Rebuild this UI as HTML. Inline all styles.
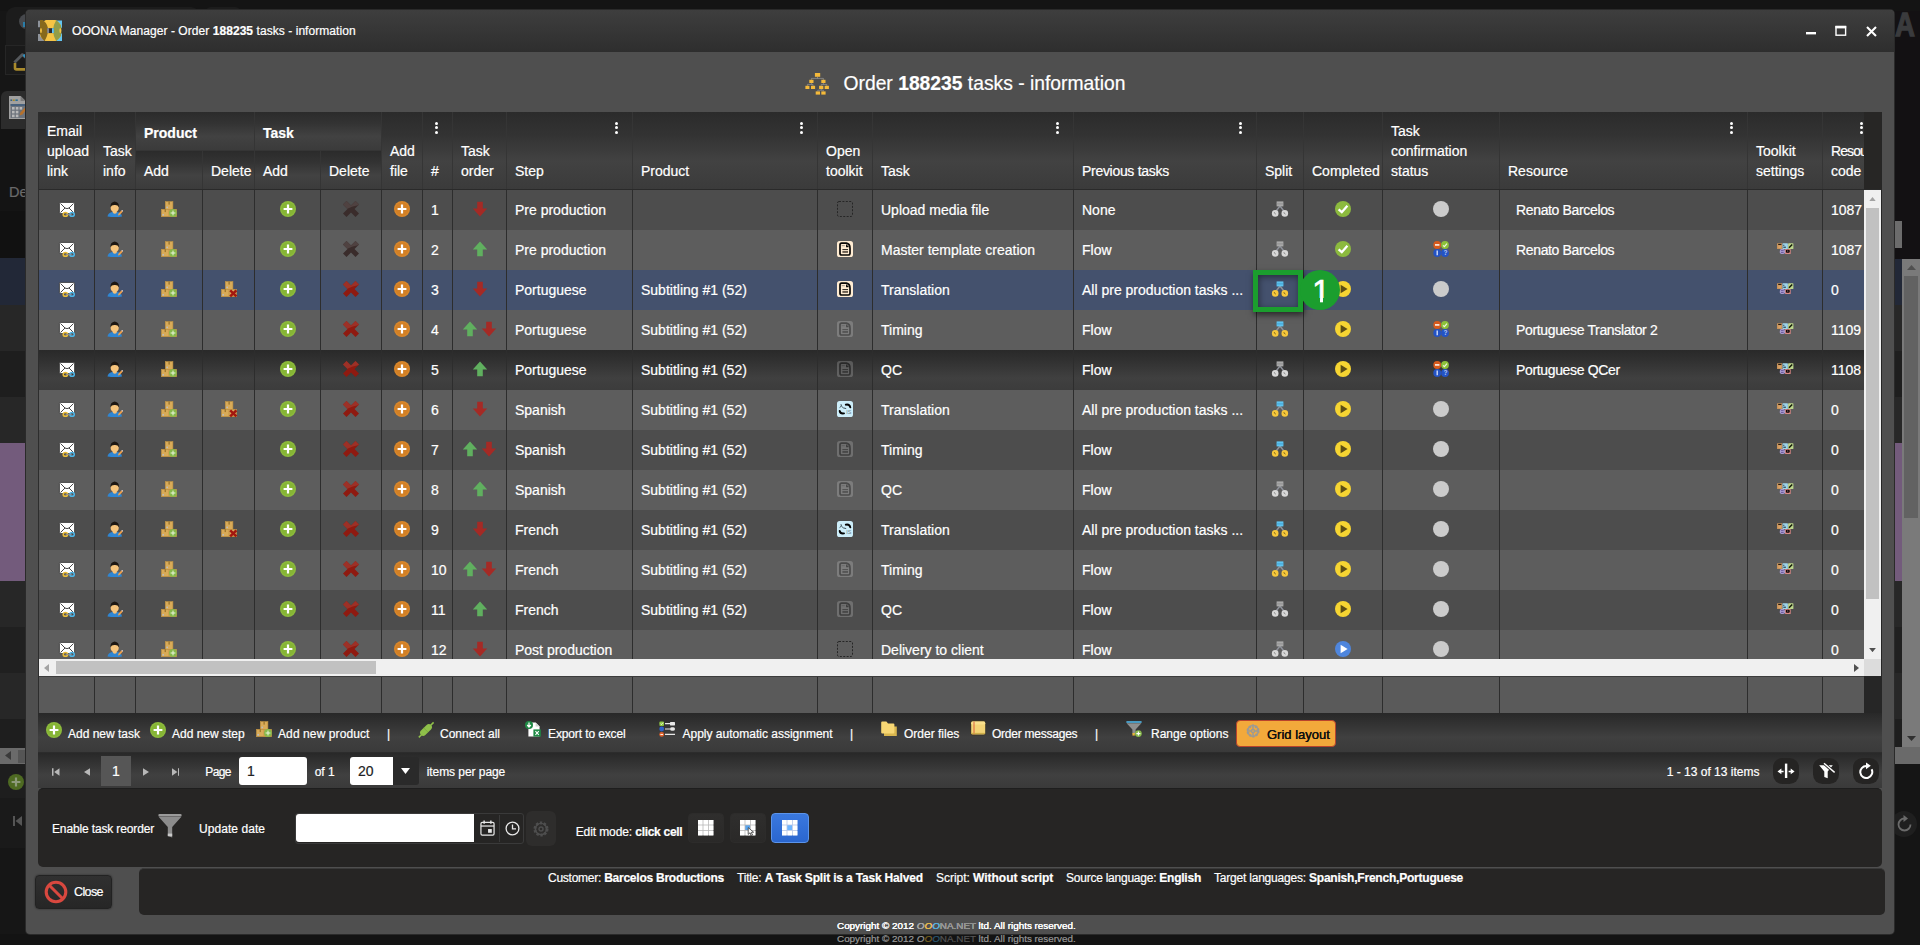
<!DOCTYPE html>
<html lang="en"><head><meta charset="utf-8"><title>OOONA Manager - Order 188235 tasks - information</title>
<style>
*{box-sizing:border-box;margin:0;padding:0}
html,body{width:1920px;height:945px;overflow:hidden;background:#161616}
body{position:relative;font-family:"Liberation Sans",sans-serif;color:#fff;font-size:14px;-webkit-text-stroke:0.2px currentColor}
.abs{position:absolute}
svg.ic{display:inline-block;vertical-align:top;overflow:visible}
#win{position:absolute;left:0;top:0;width:1920px;height:945px}
#winbg{position:absolute;left:26px;top:10px;width:1868px;height:924px;background:#4f4f4f;border-radius:4px;box-shadow:0 0 0 1px #2a2a2a}
#tbar{position:absolute;left:26px;top:10px;width:1868px;height:42px;border-radius:4px 4px 0 0;background:linear-gradient(#3e3e3e,#2e2e2e)}
#tbar .tt{position:absolute;left:46px;top:1px;line-height:40px;font-size:12px;color:#fff;white-space:nowrap}
#title{position:absolute;left:843.5px;top:65px;height:38px;line-height:38px;font-size:19.3px;white-space:nowrap}
#grid{position:absolute;left:38px;top:112px;width:1844px;height:601px;overflow:hidden;background:#262626}
#gleft{position:absolute;left:0;top:0;width:1px;height:601px;background:#2d2d2d}
#gright{position:absolute;left:1843px;top:0;width:1px;height:601px;background:#262626}
#hdr{position:absolute;left:0;top:0;width:1843px;height:78px;background:linear-gradient(#2b2b2b 0%,#333 30%,#424242 64%,#3b3b3b 100%);border-bottom:1px solid #2a2a2a;overflow:hidden}
#hdrin{position:absolute;left:0;top:0;width:1826px;height:78px;overflow:hidden}
.h{position:absolute;top:0;height:77px;border-left:1px solid #353535;font-size:14px;line-height:20px;padding:0 0 8px 8px;display:flex;align-items:flex-end;white-space:nowrap;overflow:hidden;background:linear-gradient(#2b2b2b 0%,#333 30%,#424242 64%,#3b3b3b 100%)}
.h.first{border-left:0;padding-left:9px}
.h.g{height:39px;font-weight:bold;padding-bottom:7px;border-bottom:1px solid #353535}
.h.s{top:39px;height:38px}
.dots{position:absolute;top:9.5px;width:3px;height:12px}
.dots i{display:block;width:3px;height:3px;border-radius:50%;background:#fff;margin-bottom:1.5px}
#rows{position:absolute;left:0;top:78px;width:1826px;height:469px;overflow:hidden;background:#4d4d4d}
.row{position:absolute;left:0;width:1860px;height:40px;background:#4d4d4d}
.row.alt{background:#5d5d5d}
.row.sel{background:#44516d}
.row.hov{background:linear-gradient(#292929 0%,#323232 30%,#404040 70%,#3c3c3c 100%)}
.c{position:absolute;top:0;height:40px;border-left:1px solid #2d2d2d;white-space:nowrap;overflow:hidden}
.c.first{border-left:0;padding-left:1px}
.c.t{line-height:40px;padding-left:8px;font-size:14px}
.c.res{padding-left:16px;letter-spacing:-0.35px}
.c.i{text-align:center;padding-top:11px;font-size:0}
.c.tk{padding-top:13px}
.gap{display:inline-block;width:3px}
#hsb{position:absolute;left:0;top:547px;width:1843px;height:17px;background:#f0f0f0}
#vsb{position:absolute;left:1826px;top:78px;width:17px;height:469px;background:#f0f0f0}
#gfoot{position:absolute;left:0;top:564px;width:1826px;height:37px;background:#5a5a5a;overflow:hidden;border-top:1px solid #3c3c3c}
#gfoot div{position:absolute;top:0;height:37px;border-left:1px solid #2d2d2d}
#tool{position:absolute;left:38px;top:713px;width:1844px;height:39px;background:linear-gradient(#282828 0%,#393939 45%,#404040 62%,#3a3a3a 100%);font-size:12px}
#tool span{position:absolute;top:12px;line-height:18px;white-space:nowrap}
#tool svg{position:absolute}
#pager{position:absolute;left:38px;top:752px;width:1844px;height:36px;background:linear-gradient(#282828 0%,#393939 45%,#404040 62%,#3a3a3a 100%);border-top:1px solid #2c2c2c;font-size:12px}
#pager span{position:absolute;top:10px;line-height:18px;white-space:nowrap}
#panel{position:absolute;left:38px;top:788px;width:1844px;height:79px;background:#262524;border-radius:5px;font-size:12px;border-top:1px solid #1e1e1e}
#panel span{position:absolute;line-height:18px;white-space:nowrap}
#info{position:absolute;left:139px;top:868px;width:1746px;height:47px;background:#262524;border-radius:5px;font-size:12px;border-top:1px solid #3a3a3a}
#info span{position:absolute;top:1px;line-height:16px;white-space:nowrap}
#closeb{position:absolute;left:35px;top:875px;width:77px;height:34px;background:linear-gradient(#303030,#262626);border:1px solid #222;border-radius:4px;font-size:12px;box-shadow:0 0 2px rgba(0,0,0,.5)}
.copy{position:absolute;left:837px;font-size:9.9px;line-height:12px;white-space:nowrap}
b{font-weight:bold}

#hdrcap{position:absolute;left:1826px;top:0;width:18px;height:77px;background:#272625}

</style></head>
<body>
<div id="bg">
<div class="abs" style="left:0;top:0;width:1920px;height:11px;background:#141414"></div>
<div class="abs" style="left:6px;top:6.5px;width:194px;height:40px;background:#1c1c1c;border-radius:9px 9px 0 0"></div>
<div class="abs" style="left:19px;top:13.5px;width:15px;height:15px;border-radius:8px;background:#46484c"></div><div class="abs" style="left:23px;top:22px;width:4px;height:5px;background:#2a7da8"></div>
<div class="abs" style="left:205px;top:7px;width:36px;height:10px;background:#1c1c1c;border-radius:6px 6px 0 0"></div>
<div class="abs" style="left:5px;top:45px;width:30px;height:30px;background:#1a1a1a;border:1px solid #262626"></div>
<svg class="abs" style="left:13px;top:52px" width="14" height="20" viewBox="0 0 14 20"><path d="M1.4 10.6 L9.4 2.6 L14 6.4" fill="none" stroke="#55585c" stroke-width="2.8" stroke-linejoin="round"/><path d="M14 8 L9.6 3.6 L11 2.2 H14Z" fill="#2a8fc0"/><path d="M2 11 V16 Q2 17.4 3.4 17.4 H14" fill="none" stroke="#a98a2c" stroke-width="2.6"/></svg>
<div class="abs" style="left:1px;top:91px;width:60px;height:38px;background:#2c2c2c;border-radius:6px 6px 0 0"></div>
<svg class="abs" style="left:9.4px;top:95.8px;opacity:.8" width="16.6" height="23" viewBox="0 0 16.6 23"><path d="M0 0 H11.6 L16.6 5 V23 H0Z" fill="#bdbdbd"/><path d="M11.6 0 V5 H16.6Z" fill="#8e8e8e"/><rect x="1.4" y="3.4" width="1.8" height="1.6" fill="#3c6e96"/><rect x="3.8" y="3.4" width="2" height="1.6" fill="#c9a227"/><rect x="6.4" y="3.4" width="2.4" height="1.6" fill="#2d7fae"/><rect x="1.6" y="8" width="15" height="14" fill="#7c848f"/><rect x="1.6" y="8" width="15" height="2" fill="#4f6f91"/><g fill="#dcdcdc"><rect x="3" y="11" width="2.6" height="2.6"/><rect x="6.8" y="11" width="2.6" height="2.6"/><rect x="10.6" y="11" width="2.6" height="2.6"/><rect x="3" y="14.8" width="2.6" height="2.6"/><rect x="6.8" y="14.8" width="2.6" height="2.6"/><rect x="3" y="18.6" width="2.6" height="2.6"/><rect x="6.8" y="18.6" width="2.6" height="2.6"/></g><path d="M10.6 19.6 L11.4 16.4 L16 11.6 L17.6 13.2 L13.4 18.4Z" fill="#d9832c"/></svg>
<div class="abs" style="left:0;top:129px;width:30px;height:82px;background:#141414"></div>
<div class="abs" style="left:9px;top:183px;font-size:14.5px;color:#6a6a6a;line-height:18px">De</div>
<div class="abs" style="left:0;top:211px;width:30px;height:47px;background:#111"></div>
<div class="abs" style="left:0;top:258px;width:30px;height:47px;background:#222837"></div>
<div class="abs" style="left:0;top:305px;width:30px;height:46px;background:#272727"></div>
<div class="abs" style="left:0;top:351px;width:30px;height:46px;background:#1e1e1e"></div>
<div class="abs" style="left:0;top:397px;width:30px;height:46px;background:#272727"></div>
<div class="abs" style="left:0;top:443px;width:30px;height:138px;background:#735b7c"></div>
<div class="abs" style="left:0;top:581px;width:30px;height:46px;background:#272727"></div>
<div class="abs" style="left:0;top:627px;width:30px;height:46px;background:#202020"></div>
<div class="abs" style="left:0;top:673px;width:30px;height:46px;background:#272727"></div>
<div class="abs" style="left:0;top:719px;width:30px;height:29px;background:#1e1e1e"></div>
<div class="abs" style="left:0;top:748px;width:30px;height:17px;background:#6a6a6a"></div><div class="abs" style="left:18px;top:750px;width:12px;height:13px;background:#555"></div>
<svg class="abs" style="left:5px;top:751px" width="6" height="9" viewBox="0 0 6 9"><path d="M6 0V9L0 4.5Z" fill="#3a3a3a"/></svg>
<div class="abs" style="left:0;top:764px;width:30px;height:34px;background:#1e1e1e"></div>
<svg class="abs" style="left:8px;top:774px" width="16" height="16" viewBox="0 0 16 16"><circle cx="8" cy="8" r="8" fill="#4e6a22"/><path d="M8 3.6V12.4M3.6 8H12.4" stroke="#8d9a7a" stroke-width="2.2"/></svg>
<div class="abs" style="left:0;top:798px;width:30px;height:50px;background:#1a1a1a"></div>
<svg class="abs" style="left:13px;top:816px" width="9" height="10" viewBox="0 0 9 10"><path d="M1 0V10" stroke="#555" stroke-width="2"/><path d="M9 0V10L2.5 5Z" fill="#555"/></svg>
<div class="abs" style="left:0;top:848px;width:30px;height:97px;background:#161616"></div>
<div class="abs" style="left:0;top:934px;width:1920px;height:11px;background:#131313"></div>
<!-- right strip -->
<div class="abs" style="left:1890px;top:11px;width:30px;height:60px;background:#131113"></div>
<div class="abs" style="left:1895px;top:7px;width:25px;font-size:32.5px;font-weight:bold;line-height:36px;color:#3a3b3d;height:36px;-webkit-text-stroke:1.3px #3a3b3d"><span style="display:inline-block;transform:scaleX(.85);transform-origin:0 0">A</span></div>
<div class="abs" style="left:1890px;top:71px;width:30px;height:60px;background:#131113"></div>
<div class="abs" style="left:1890px;top:131px;width:30px;height:128px;background:#131113"></div>


<div class="abs" style="left:1894px;top:221px;width:8px;height:27px;background:#6c6c6c"></div>
<div class="abs" style="left:1890px;top:259px;width:12px;height:46px;background:#222837"></div>
<div class="abs" style="left:1890px;top:305px;width:13px;height:46px;background:#272727"></div>
<div class="abs" style="left:1890px;top:351px;width:13px;height:46px;background:#1e1e1e"></div>
<div class="abs" style="left:1890px;top:397px;width:13px;height:46px;background:#272727"></div>
<div class="abs" style="left:1890px;top:443px;width:13px;height:138px;background:#735b7c"></div>
<div class="abs" style="left:1890px;top:581px;width:13px;height:46px;background:#272727"></div>
<div class="abs" style="left:1890px;top:627px;width:13px;height:46px;background:#202020"></div>
<div class="abs" style="left:1890px;top:673px;width:13px;height:46px;background:#272727"></div>
<div class="abs" style="left:1890px;top:719px;width:13px;height:28px;background:#1e1e1e"></div>
<div class="abs" style="left:1890px;top:747px;width:30px;height:17px;background:#6a6a6a"></div>
<div class="abs" style="left:1902px;top:259px;width:18px;height:488px;background:#7a7a7a"></div>
<div class="abs" style="left:1904px;top:276px;width:14px;height:242px;background:#626262"></div>
<svg class="abs" style="left:1907px;top:265px" width="9" height="5" viewBox="0 0 9 5"><path d="M0 5H9L4.5 0Z" fill="#505050"/></svg>
<svg class="abs" style="left:1907px;top:736px" width="9" height="5" viewBox="0 0 9 5"><path d="M0 0H9L4.5 5Z" fill="#303030"/></svg>
<div class="abs" style="left:1890px;top:764px;width:30px;height:181px;background:#151515"></div>
<div class="abs" style="left:1891px;top:811px;width:26px;height:26px;border-radius:13px;background:#1f1f1f"></div>
<svg class="abs" style="left:1896px;top:815px" width="17" height="18" viewBox="0 0 17 18"><path d="M8.5 3.5 A6 6 0 1 0 14.5 9.5" fill="none" stroke="#6a6a6a" stroke-width="1.8"/><path d="M7.5 0V7L12 3.5Z" fill="#6a6a6a"/></svg>
</div>
<div id="win">
<div id="winbg"></div>
<div id="tbar">
<svg class="abs" style="left:11.8px;top:10px" width="24.4" height="21.4" viewBox="0 0 24.4 21.4"><clipPath id="lgb"><rect x="0" y="0" width="24.4" height="21.4"/></clipPath><clipPath id="lgy"><rect x="2" y="0" width="21.2" height="21.4"/></clipPath><clipPath id="lgd"><circle cx="12.6" cy="10.6" r="11.6"/></clipPath><g clip-path="url(#lgb)"><path d="M0 0.8 H2.4 V7.2 H0Z M0 14 H2.2 L6.4 21 H0Z" fill="#8e939b"/><path d="M24.4 0.4 V7.8 H22 L18 0.4Z M24.4 21.2 V13.6 H22 L18 21.2Z" fill="#63c4f0"/><g clip-path="url(#lgy)"><circle cx="12.6" cy="10.6" r="11.6" fill="#f5c445"/><path d="M2 0 H5 Q10.6 5 10 10.6 Q9.8 16.4 6.4 21 Q3.2 18.6 2 14Z" fill="#86691c"/><g clip-path="url(#lgd)"><path d="M18.4 0 H26 V21.4 H18.4 Q14.8 15.6 15.2 10.6 Q14.8 5.6 18.4 0Z" fill="#929d48"/></g></g><ellipse cx="3" cy="10.6" rx="0.9" ry="2.5" fill="#f5c445"/><ellipse cx="22.3" cy="10.6" rx="0.9" ry="2.6" fill="#f5c445"/><rect x="9.4" y="8.2" width="6.4" height="4.9" fill="#2a2a33"/><rect x="9.2" y="8.2" width="1.7" height="4.9" fill="#8e939b"/><rect x="14" y="8.2" width="1.9" height="4.9" fill="#63c4f0"/></g></svg>
<div class="tt" style="letter-spacing:0.06px">OOONA Manager - Order <b>188235</b> tasks - information</div>
<svg class="abs" style="left:1779px;top:22px" width="12" height="3" viewBox="0 0 12 3"><rect x="1" y="0" width="10" height="2.4" fill="#fff"/></svg>
<svg class="abs" style="left:1809px;top:15px" width="12" height="12" viewBox="0 0 12 12"><rect x="1" y="1.6" width="9.6" height="8.6" fill="none" stroke="#fff" stroke-width="1.4"/><rect x="0.4" y="0.8" width="10.8" height="2.6" fill="#fff"/></svg>
<svg class="abs" style="left:1839.5px;top:15.5px" width="11" height="11" viewBox="0 0 11 11"><path d="M1 1 L10 10 M10 1 L1 10" stroke="#fff" stroke-width="2.1"/></svg>
</div>
<svg class="abs" style="left:805px;top:73px" width="24" height="22" viewBox="0 0 24 22"><path d="M12.5 3.8V5.4M6.4 6.8V5.4H18.4V6.8M6.4 10V11.4M2.4 12.8V11.4H8V12.8M18.4 10V11.4M16.2 12.8V11.4H21.8V12.8M16.2 16V17.2M12.8 18.4V17.2H18.4V18.4" fill="none" stroke="#9a9a9a" stroke-width="0.7"/><g fill="#f4b93a"><rect x="9.9" y="0" width="5.3" height="3.8"/><rect x="4.3" y="6.8" width="4.2" height="3.2"/><rect x="16.3" y="6.8" width="4.2" height="3.2"/><rect x="0.4" y="12.8" width="4" height="3.2"/><rect x="6" y="12.8" width="4.1" height="3.2"/><rect x="14.1" y="12.8" width="4.2" height="3.2"/><rect x="19.7" y="12.8" width="4.2" height="3.2"/><rect x="10.7" y="18.4" width="4.3" height="3.2"/><rect x="16.3" y="18.4" width="4.3" height="3.2"/></g></svg>
<div id="title">Order <b>188235</b> tasks - information</div>
<div id="grid">
<div id="hdr"><div id="hdrin">
<div class="h first" style="left:0px;width:56px"><div>Email<br>upload<br>link</div><div id="hdrcap"></div></div>
<div class="h " style="left:56px;width:41px"><div>Task<br>info</div><div id="hdrcap"></div></div>
<div class="h g" style="left:97px;width:119px"><div>Product</div><div id="hdrcap"></div></div>
<div class="h s" style="left:97px;width:67px"><div>Add</div><div id="hdrcap"></div></div>
<div class="h s" style="left:164px;width:52px"><div>Delete</div><div id="hdrcap"></div></div>
<div class="h g" style="left:216px;width:127px"><div>Task</div><div id="hdrcap"></div></div>
<div class="h s" style="left:216px;width:66px"><div>Add</div><div id="hdrcap"></div></div>
<div class="h s" style="left:282px;width:61px"><div>Delete</div><div id="hdrcap"></div></div>
<div class="h " style="left:343px;width:41px"><div>Add<br>file</div><div id="hdrcap"></div></div>
<div class="h " style="left:384px;width:30px"><div>#</div><div id="hdrcap"></div></div>
<div class="dots" style="left:397px"><i></i><i></i><i></i></div>
<div class="h " style="left:414px;width:54px"><div>Task<br>order</div><div id="hdrcap"></div></div>
<div class="h " style="left:468px;width:126px"><div>Step</div><div id="hdrcap"></div></div>
<div class="dots" style="left:577px"><i></i><i></i><i></i></div>
<div class="h " style="left:594px;width:185px"><div>Product</div><div id="hdrcap"></div></div>
<div class="dots" style="left:762px"><i></i><i></i><i></i></div>
<div class="h " style="left:779px;width:55px"><div>Open<br>toolkit</div><div id="hdrcap"></div></div>
<div class="h " style="left:834px;width:201px"><div>Task</div><div id="hdrcap"></div></div>
<div class="dots" style="left:1018px"><i></i><i></i><i></i></div>
<div class="h " style="left:1035px;width:183px"><div style="letter-spacing:-0.3px">Previous tasks</div><div id="hdrcap"></div></div>
<div class="dots" style="left:1201px"><i></i><i></i><i></i></div>
<div class="h " style="left:1218px;width:47px"><div>Split</div><div id="hdrcap"></div></div>
<div class="h " style="left:1265px;width:79px"><div>Completed</div><div id="hdrcap"></div></div>
<div class="h " style="left:1344px;width:117px"><div>Task<br>confirmation<br>status</div><div id="hdrcap"></div></div>
<div class="h " style="left:1461px;width:248px"><div>Resource</div><div id="hdrcap"></div></div>
<div class="dots" style="left:1692px"><i></i><i></i><i></i></div>
<div class="h " style="left:1709px;width:75px"><div>Toolkit<br>settings</div><div id="hdrcap"></div></div>
<div class="h " style="left:1784px;width:75px"><div><span style="letter-spacing:-0.9px">Resource</span><br>code</div><div id="hdrcap"></div></div>
<div class="dots" style="left:1822px"><i></i><i></i><i></i></div>
</div><div id="hdrcap"></div></div>
<div id="rows">
<div class="row " style="top:0px">
<div class="c i first" style="left:0px;width:56px"><svg class="ic" width="16" height="16" viewBox="0 0 16 16" ><rect x="0.4" y="1.4" width="15.2" height="11.2" rx="1" fill="#fff" stroke="#2e2e2e" stroke-width="0.8"/>
<path d="M1.5 2.5 L6 7 Q8 8.2 10 7 L14.5 2.5 M1.5 11.5 L6 7 M14.5 11.5 L10 7" fill="none" stroke="#333" stroke-width="0.9"/>
<ellipse cx="6.4" cy="13.4" rx="2.2" ry="1.85" fill="none" stroke="#e9bd3a" stroke-width="1.5"/>
<ellipse cx="13.1" cy="13.4" rx="2.2" ry="1.85" fill="none" stroke="#4db4e6" stroke-width="1.5"/>
<path d="M6.6 13.4 H12.8" stroke="#8a8f96" stroke-width="1"/></svg></div><div class="c i" style="left:56px;width:41px"><svg class="ic" width="16" height="16" viewBox="0 0 16 16" ><path d="M0.5 15.6 Q1 11.6 5.5 11 L10 11 Q14.5 11.6 15 15.6 Q8 16.6 0.5 15.6Z" fill="#2f86d3"/>
<path d="M5.6 10.2 L6 12 Q7.7 13.6 9.6 12 L9.9 10.2Z" fill="#f4bf78"/>
<ellipse cx="7.7" cy="6.8" rx="4.1" ry="4.5" fill="#f6c47c"/>
<path d="M3.5 6.4 Q3 1.4 7.7 0.6 Q12.4 1.4 11.9 6.4 Q11 3.8 7.7 4 Q4.4 3.8 3.5 6.4Z" fill="#1d1712"/>
<path d="M11 14.6 L11.4 12.8 L14.4 9.6 L15.6 10.8 L12.7 14Z" fill="#f0a04b"/>
<path d="M14.4 9.6 L15 9 Q15.8 9 16 10.2 L15.6 10.8Z" fill="#f3e6e0"/></svg></div><div class="c i" style="left:97px;width:67px"><svg class="ic" width="16" height="16" viewBox="0 0 16 16" ><rect x="4.3" y="0.6" width="7.6" height="7.8" fill="#d9ab58" stroke="#c09240" stroke-width="0.6"/>
<rect x="0.4" y="8.3" width="7.7" height="7.4" fill="#d9ab58" stroke="#c09240" stroke-width="0.6"/>
<rect x="8.1" y="8.3" width="7.5" height="7.4" fill="#d9ab58" stroke="#c09240" stroke-width="0.6"/>
<rect x="7.6" y="0.6" width="1" height="3" fill="#8a6520"/>
<rect x="3.7" y="8.3" width="1" height="2.8" fill="#8a6520"/>
<rect x="5.4" y="5.6" width="1.6" height="1.6" fill="#b9bcc0"/><rect x="1.4" y="13" width="1.6" height="1.6" fill="#b9bcc0"/><circle cx="12" cy="12" r="3.9" fill="#86b84a"/><path d="M12 9.6V14.4M9.6 12H14.4" stroke="#e9f4dc" stroke-width="1"/></svg></div><div class="c i" style="left:164px;width:52px"></div><div class="c i" style="left:216px;width:66px"><svg class="ic" width="16" height="16" viewBox="0 0 16 16" ><circle cx="8" cy="8" r="8" fill="#8dbb3c"/><circle cx="8" cy="8" r="6.6" fill="#86b535"/><path d="M8 3.6V12.4M3.6 8H12.4" stroke="#fff" stroke-width="2.2"/></svg></div><div class="c i" style="left:282px;width:61px"><svg class="ic" width="16" height="16" viewBox="0 0 16 16" ><path d="M3.5 0 L8 4.5 L12.5 0 L16 3.5 L11.5 8 L16 12.5 L12.5 16 L8 11.5 L3.5 16 L0 12.5 L4.5 8 L0 3.5Z" fill="#3a2c2b"/><path d="M3.5 0 L8 4.5 L12.5 0 L16 3.5 L15.2 4.3 Q9.5 5 4.9 7.6 L4.5 8 L0 3.5Z" fill="#4f4241"/></svg></div><div class="c i" style="left:343px;width:41px"><svg class="ic" width="16" height="16" viewBox="0 0 16 16" ><circle cx="8" cy="8" r="8" fill="#d9872b"/><circle cx="8" cy="8" r="6.6" fill="#d28026"/><path d="M8 3.6V12.4M3.6 8H12.4" stroke="#fff" stroke-width="2.2"/></svg></div><div class="c t" style="left:384px;width:30px">1</div><div class="c i" style="left:414px;width:54px"><svg class="ic" width="16" height="16" viewBox="0 0 16 16" ><path d="M5.2 0.8 H10.8 V7.6 H15.2 L8 15.4 L0.8 7.6 H5.2Z" fill="#a52a25"/></svg></div><div class="c t" style="left:468px;width:126px">Pre production</div><div class="c t" style="left:594px;width:185px"></div><div class="c i" style="left:779px;width:55px"><svg class="ic" width="16" height="16" viewBox="0 0 16 16" ><rect x="0.5" y="0.5" width="15" height="15" rx="1.5" fill="none" stroke="#262626" stroke-width="1" stroke-dasharray="2 1.4"/></svg></div><div class="c t" style="left:834px;width:201px">Upload media file</div><div class="c t" style="left:1035px;width:183px">None</div><div class="c i" style="left:1218px;width:47px"><svg class="ic" width="16" height="16" viewBox="0 0 16 16" ><path d="M8 5 L3.4 11 M8 5 L12.6 11" stroke="#8d9099" stroke-width="1.5" fill="none"/><rect x="4.6" y="0.4" width="6.8" height="5" fill="#a9a9a9"/><path d="M4.6 2.9H11.4" stroke="#8a8a8a" stroke-width="0.8"/><circle cx="3.2" cy="12.4" r="3.3" fill="#d8d8d8"/><circle cx="12.8" cy="12.4" r="3.3" fill="#d8d8d8"/><path d="M2.4 11 V12.2 L4 13.2 M12 11 V12.2 L13.6 13.2" stroke="#8a8a8a" stroke-width="0.8" fill="none"/></svg></div><div class="c i" style="left:1265px;width:79px"><svg class="ic" width="16" height="16" viewBox="0 0 16 16" ><circle cx="8" cy="8" r="8" fill="#8cba3e"/><path d="M3.6 8.4 L6.8 11.2 L12.4 4.8" fill="none" stroke="#fff" stroke-width="2.3"/></svg></div><div class="c i" style="left:1344px;width:117px"><svg class="ic" width="16" height="16" viewBox="0 0 16 16" ><circle cx="8" cy="8" r="8" fill="#cbcbcb"/></svg></div><div class="c t res" style="left:1461px;width:248px">Renato Barcelos</div><div class="c i tk" style="left:1709px;width:75px"></div><div class="c t" style="left:1784px;width:75px">1087</div>
</div>
<div class="row alt" style="top:40px">
<div class="c i first" style="left:0px;width:56px"><svg class="ic" width="16" height="16" viewBox="0 0 16 16" ><rect x="0.4" y="1.4" width="15.2" height="11.2" rx="1" fill="#fff" stroke="#2e2e2e" stroke-width="0.8"/>
<path d="M1.5 2.5 L6 7 Q8 8.2 10 7 L14.5 2.5 M1.5 11.5 L6 7 M14.5 11.5 L10 7" fill="none" stroke="#333" stroke-width="0.9"/>
<ellipse cx="6.4" cy="13.4" rx="2.2" ry="1.85" fill="none" stroke="#e9bd3a" stroke-width="1.5"/>
<ellipse cx="13.1" cy="13.4" rx="2.2" ry="1.85" fill="none" stroke="#4db4e6" stroke-width="1.5"/>
<path d="M6.6 13.4 H12.8" stroke="#8a8f96" stroke-width="1"/></svg></div><div class="c i" style="left:56px;width:41px"><svg class="ic" width="16" height="16" viewBox="0 0 16 16" ><path d="M0.5 15.6 Q1 11.6 5.5 11 L10 11 Q14.5 11.6 15 15.6 Q8 16.6 0.5 15.6Z" fill="#2f86d3"/>
<path d="M5.6 10.2 L6 12 Q7.7 13.6 9.6 12 L9.9 10.2Z" fill="#f4bf78"/>
<ellipse cx="7.7" cy="6.8" rx="4.1" ry="4.5" fill="#f6c47c"/>
<path d="M3.5 6.4 Q3 1.4 7.7 0.6 Q12.4 1.4 11.9 6.4 Q11 3.8 7.7 4 Q4.4 3.8 3.5 6.4Z" fill="#1d1712"/>
<path d="M11 14.6 L11.4 12.8 L14.4 9.6 L15.6 10.8 L12.7 14Z" fill="#f0a04b"/>
<path d="M14.4 9.6 L15 9 Q15.8 9 16 10.2 L15.6 10.8Z" fill="#f3e6e0"/></svg></div><div class="c i" style="left:97px;width:67px"><svg class="ic" width="16" height="16" viewBox="0 0 16 16" ><rect x="4.3" y="0.6" width="7.6" height="7.8" fill="#d9ab58" stroke="#c09240" stroke-width="0.6"/>
<rect x="0.4" y="8.3" width="7.7" height="7.4" fill="#d9ab58" stroke="#c09240" stroke-width="0.6"/>
<rect x="8.1" y="8.3" width="7.5" height="7.4" fill="#d9ab58" stroke="#c09240" stroke-width="0.6"/>
<rect x="7.6" y="0.6" width="1" height="3" fill="#8a6520"/>
<rect x="3.7" y="8.3" width="1" height="2.8" fill="#8a6520"/>
<rect x="5.4" y="5.6" width="1.6" height="1.6" fill="#b9bcc0"/><rect x="1.4" y="13" width="1.6" height="1.6" fill="#b9bcc0"/><circle cx="12" cy="12" r="3.9" fill="#86b84a"/><path d="M12 9.6V14.4M9.6 12H14.4" stroke="#e9f4dc" stroke-width="1"/></svg></div><div class="c i" style="left:164px;width:52px"></div><div class="c i" style="left:216px;width:66px"><svg class="ic" width="16" height="16" viewBox="0 0 16 16" ><circle cx="8" cy="8" r="8" fill="#8dbb3c"/><circle cx="8" cy="8" r="6.6" fill="#86b535"/><path d="M8 3.6V12.4M3.6 8H12.4" stroke="#fff" stroke-width="2.2"/></svg></div><div class="c i" style="left:282px;width:61px"><svg class="ic" width="16" height="16" viewBox="0 0 16 16" ><path d="M3.5 0 L8 4.5 L12.5 0 L16 3.5 L11.5 8 L16 12.5 L12.5 16 L8 11.5 L3.5 16 L0 12.5 L4.5 8 L0 3.5Z" fill="#3a2c2b"/><path d="M3.5 0 L8 4.5 L12.5 0 L16 3.5 L15.2 4.3 Q9.5 5 4.9 7.6 L4.5 8 L0 3.5Z" fill="#4f4241"/></svg></div><div class="c i" style="left:343px;width:41px"><svg class="ic" width="16" height="16" viewBox="0 0 16 16" ><circle cx="8" cy="8" r="8" fill="#d9872b"/><circle cx="8" cy="8" r="6.6" fill="#d28026"/><path d="M8 3.6V12.4M3.6 8H12.4" stroke="#fff" stroke-width="2.2"/></svg></div><div class="c t" style="left:384px;width:30px">2</div><div class="c i" style="left:414px;width:54px"><svg class="ic" width="16" height="16" viewBox="0 0 16 16" ><path d="M5.2 15.2 H10.8 V8.4 H15.2 L8 0.6 L0.8 8.4 H5.2Z" fill="#60b05f"/></svg></div><div class="c t" style="left:468px;width:126px">Pre production</div><div class="c t" style="left:594px;width:185px"></div><div class="c i" style="left:779px;width:55px"><svg class="ic" width="16" height="16" viewBox="0 0 16 16" ><g opacity="1"><rect x="0" y="0" width="16" height="16" rx="2.6" fill="#ffecd2"/><path d="M4.6 2.2 H9.4 Q13 2.8 13 7.2 V12.4 Q13 14 11.4 14 H4.6 Q3 14 3 12.4 V3.8 Q3 2.2 4.6 2.2Z" fill="none" stroke="#0a0806" stroke-width="1.7"/><path d="M9.7 3.4 V5.5 H11.6" fill="none" stroke="#0a0806" stroke-width="1.3"/><path d="M5.4 8.6 H11" stroke="#0a0806" stroke-width="0.9"/><rect x="5.4" y="10.1" width="5.6" height="1.7" fill="#5a4e42"/><path d="M4.6 4.7 H7.8" stroke="#0a0806" stroke-width="0.7" stroke-opacity="0.55"/></g></svg></div><div class="c t" style="left:834px;width:201px">Master template creation</div><div class="c t" style="left:1035px;width:183px">Flow</div><div class="c i" style="left:1218px;width:47px"><svg class="ic" width="16" height="16" viewBox="0 0 16 16" ><path d="M8 5 L3.4 11 M8 5 L12.6 11" stroke="#8d9099" stroke-width="1.5" fill="none"/><rect x="4.6" y="0.4" width="6.8" height="5" fill="#a9a9a9"/><path d="M4.6 2.9H11.4" stroke="#8a8a8a" stroke-width="0.8"/><circle cx="3.2" cy="12.4" r="3.3" fill="#d8d8d8"/><circle cx="12.8" cy="12.4" r="3.3" fill="#d8d8d8"/><path d="M2.4 11 V12.2 L4 13.2 M12 11 V12.2 L13.6 13.2" stroke="#8a8a8a" stroke-width="0.8" fill="none"/></svg></div><div class="c i" style="left:1265px;width:79px"><svg class="ic" width="16" height="16" viewBox="0 0 16 16" ><circle cx="8" cy="8" r="8" fill="#8cba3e"/><path d="M3.6 8.4 L6.8 11.2 L12.4 4.8" fill="none" stroke="#fff" stroke-width="2.3"/></svg></div><div class="c i" style="left:1344px;width:117px"><svg class="ic" width="16" height="16" viewBox="0 0 16 16" ><circle cx="4.2" cy="4" r="3.9" fill="#d65a1d"/><rect x="2" y="3" width="4.4" height="1.8" fill="#f6e4d8"/><circle cx="12" cy="4" r="3.9" fill="#8cc03a"/><path d="M10 4.4 L11.4 5.6 L14 2.6" fill="none" stroke="#eef6df" stroke-width="1.2"/><circle cx="4.2" cy="12" r="3.9" fill="#2453c4"/><path d="M4.2 9.4 V14.2" stroke="#dfe7fb" stroke-width="1.3"/><circle cx="12" cy="12" r="3.9" fill="#2453c4"/><text x="10.4" y="14.4" font-size="6.5" font-weight="bold" font-family="Liberation Sans, sans-serif" fill="#b9c8f0">?</text></svg></div><div class="c t res" style="left:1461px;width:248px">Renato Barcelos</div><div class="c i tk" style="left:1709px;width:75px"><svg class="ic" width="16" height="11" viewBox="0 0 16 11" ><rect x="0" y="0.2" width="5.3" height="5.8" rx="0.6" fill="#c8935a"/><rect x="1.2" y="0.9" width="3.2" height="1.1" fill="#2a1c10"/><rect x="1.4" y="2.6" width="2.8" height="2.4" fill="#d9a469"/><rect x="5.5" y="0.2" width="5.4" height="5.8" rx="0.6" fill="#9dd3ea"/><rect x="6.3" y="3.7" width="2.6" height="1" fill="#1c2a33"/><rect x="6.3" y="1.8" width="1" height="1" fill="#1c2a33"/><rect x="11.1" y="0.2" width="5.3" height="5.8" rx="0.6" fill="#bcd68c"/><path d="M12 4.8 L15.2 1.4" stroke="#141b08" stroke-width="1.5"/><rect x="2.8" y="6.1" width="5.2" height="5" rx="1.8" fill="#a99ad0"/><path d="M4 7.6h2.6M4 9.5h2.6" stroke="#6a5a9a" stroke-width="0.9"/><rect x="8.1" y="6.1" width="5.6" height="5" rx="0.6" fill="#d98683"/><rect x="8.9" y="6.8" width="3.8" height="2.9" rx="0.9" fill="#0c0606"/><circle cx="10.8" cy="7.9" r="0.5" fill="#f4b7b5"/></svg></div><div class="c t" style="left:1784px;width:75px">1087</div>
</div>
<div class="row sel" style="top:80px">
<div class="c i first" style="left:0px;width:56px"><svg class="ic" width="16" height="16" viewBox="0 0 16 16" ><rect x="0.4" y="1.4" width="15.2" height="11.2" rx="1" fill="#fff" stroke="#2e2e2e" stroke-width="0.8"/>
<path d="M1.5 2.5 L6 7 Q8 8.2 10 7 L14.5 2.5 M1.5 11.5 L6 7 M14.5 11.5 L10 7" fill="none" stroke="#333" stroke-width="0.9"/>
<ellipse cx="6.4" cy="13.4" rx="2.2" ry="1.85" fill="none" stroke="#e9bd3a" stroke-width="1.5"/>
<ellipse cx="13.1" cy="13.4" rx="2.2" ry="1.85" fill="none" stroke="#4db4e6" stroke-width="1.5"/>
<path d="M6.6 13.4 H12.8" stroke="#8a8f96" stroke-width="1"/></svg></div><div class="c i" style="left:56px;width:41px"><svg class="ic" width="16" height="16" viewBox="0 0 16 16" ><path d="M0.5 15.6 Q1 11.6 5.5 11 L10 11 Q14.5 11.6 15 15.6 Q8 16.6 0.5 15.6Z" fill="#2f86d3"/>
<path d="M5.6 10.2 L6 12 Q7.7 13.6 9.6 12 L9.9 10.2Z" fill="#f4bf78"/>
<ellipse cx="7.7" cy="6.8" rx="4.1" ry="4.5" fill="#f6c47c"/>
<path d="M3.5 6.4 Q3 1.4 7.7 0.6 Q12.4 1.4 11.9 6.4 Q11 3.8 7.7 4 Q4.4 3.8 3.5 6.4Z" fill="#1d1712"/>
<path d="M11 14.6 L11.4 12.8 L14.4 9.6 L15.6 10.8 L12.7 14Z" fill="#f0a04b"/>
<path d="M14.4 9.6 L15 9 Q15.8 9 16 10.2 L15.6 10.8Z" fill="#f3e6e0"/></svg></div><div class="c i" style="left:97px;width:67px"><svg class="ic" width="16" height="16" viewBox="0 0 16 16" ><rect x="4.3" y="0.6" width="7.6" height="7.8" fill="#d9ab58" stroke="#c09240" stroke-width="0.6"/>
<rect x="0.4" y="8.3" width="7.7" height="7.4" fill="#d9ab58" stroke="#c09240" stroke-width="0.6"/>
<rect x="8.1" y="8.3" width="7.5" height="7.4" fill="#d9ab58" stroke="#c09240" stroke-width="0.6"/>
<rect x="7.6" y="0.6" width="1" height="3" fill="#8a6520"/>
<rect x="3.7" y="8.3" width="1" height="2.8" fill="#8a6520"/>
<rect x="5.4" y="5.6" width="1.6" height="1.6" fill="#b9bcc0"/><rect x="1.4" y="13" width="1.6" height="1.6" fill="#b9bcc0"/><circle cx="12" cy="12" r="3.9" fill="#86b84a"/><path d="M12 9.6V14.4M9.6 12H14.4" stroke="#e9f4dc" stroke-width="1"/></svg></div><div class="c i" style="left:164px;width:52px"><svg class="ic" width="16" height="16" viewBox="0 0 16 16" ><rect x="4.3" y="0.6" width="7.6" height="7.8" fill="#d9ab58" stroke="#c09240" stroke-width="0.6"/>
<rect x="0.4" y="8.3" width="7.7" height="7.4" fill="#d9ab58" stroke="#c09240" stroke-width="0.6"/>
<rect x="8.1" y="8.3" width="7.5" height="7.4" fill="#d9ab58" stroke="#c09240" stroke-width="0.6"/>
<rect x="7.6" y="0.6" width="1" height="3" fill="#8a6520"/>
<rect x="3.7" y="8.3" width="1" height="2.8" fill="#8a6520"/>
<rect x="5.4" y="5.6" width="1.6" height="1.6" fill="#b9bcc0"/><rect x="1.4" y="13" width="1.6" height="1.6" fill="#b9bcc0"/><path d="M9.2 9.4 L15.4 15.4 M15.4 9.4 L9.2 15.4" stroke="#a3170f" stroke-width="2.6"/></svg></div><div class="c i" style="left:216px;width:66px"><svg class="ic" width="16" height="16" viewBox="0 0 16 16" ><circle cx="8" cy="8" r="8" fill="#8dbb3c"/><circle cx="8" cy="8" r="6.6" fill="#86b535"/><path d="M8 3.6V12.4M3.6 8H12.4" stroke="#fff" stroke-width="2.2"/></svg></div><div class="c i" style="left:282px;width:61px"><svg class="ic" width="16" height="16" viewBox="0 0 16 16" ><path d="M3.5 0 L8 4.5 L12.5 0 L16 3.5 L11.5 8 L16 12.5 L12.5 16 L8 11.5 L3.5 16 L0 12.5 L4.5 8 L0 3.5Z" fill="#8f1a10"/><path d="M3.5 0 L8 4.5 L12.5 0 L16 3.5 L15.2 4.3 Q9.5 5 4.9 7.6 L4.5 8 L0 3.5Z" fill="#9c3127"/></svg></div><div class="c i" style="left:343px;width:41px"><svg class="ic" width="16" height="16" viewBox="0 0 16 16" ><circle cx="8" cy="8" r="8" fill="#d9872b"/><circle cx="8" cy="8" r="6.6" fill="#d28026"/><path d="M8 3.6V12.4M3.6 8H12.4" stroke="#fff" stroke-width="2.2"/></svg></div><div class="c t" style="left:384px;width:30px">3</div><div class="c i" style="left:414px;width:54px"><svg class="ic" width="16" height="16" viewBox="0 0 16 16" ><path d="M5.2 0.8 H10.8 V7.6 H15.2 L8 15.4 L0.8 7.6 H5.2Z" fill="#a52a25"/></svg></div><div class="c t" style="left:468px;width:126px">Portuguese</div><div class="c t" style="left:594px;width:185px">Subtitling #1 (52)</div><div class="c i" style="left:779px;width:55px"><svg class="ic" width="16" height="16" viewBox="0 0 16 16" ><g opacity="1"><rect x="0" y="0" width="16" height="16" rx="2.6" fill="#ffecd2"/><path d="M4.6 2.2 H9.4 Q13 2.8 13 7.2 V12.4 Q13 14 11.4 14 H4.6 Q3 14 3 12.4 V3.8 Q3 2.2 4.6 2.2Z" fill="none" stroke="#0a0806" stroke-width="1.7"/><path d="M9.7 3.4 V5.5 H11.6" fill="none" stroke="#0a0806" stroke-width="1.3"/><path d="M5.4 8.6 H11" stroke="#0a0806" stroke-width="0.9"/><rect x="5.4" y="10.1" width="5.6" height="1.7" fill="#5a4e42"/><path d="M4.6 4.7 H7.8" stroke="#0a0806" stroke-width="0.7" stroke-opacity="0.55"/></g></svg></div><div class="c t" style="left:834px;width:201px">Translation</div><div class="c t" style="left:1035px;width:183px">All pre production tasks ...</div><div class="c i" style="left:1218px;width:47px"><svg class="ic" width="16" height="16" viewBox="0 0 16 16" ><path d="M8 5 L3.4 11 M8 5 L12.6 11" stroke="#8d9099" stroke-width="1.5" fill="none"/><rect x="4.6" y="0.4" width="6.8" height="5" fill="#5ec5f2"/><path d="M4.6 2.9H11.4" stroke="#3f9ccc" stroke-width="0.8"/><circle cx="3.2" cy="12.4" r="3.3" fill="#f7c83a"/><circle cx="12.8" cy="12.4" r="3.3" fill="#f7c83a"/><path d="M2.4 11 V12.2 L4 13.2 M12 11 V12.2 L13.6 13.2" stroke="#7a6420" stroke-width="0.8" fill="none"/></svg></div><div class="c i" style="left:1265px;width:79px"><svg class="ic" width="16" height="16" viewBox="0 0 16 16" ><circle cx="8" cy="8" r="8" fill="#f6d532"/><path d="M5.6 3.8 L12.6 8 L5.6 12.2Z" fill="#5c4d14"/></svg></div><div class="c i" style="left:1344px;width:117px"><svg class="ic" width="16" height="16" viewBox="0 0 16 16" ><circle cx="8" cy="8" r="8" fill="#cbcbcb"/></svg></div><div class="c t res" style="left:1461px;width:248px"></div><div class="c i tk" style="left:1709px;width:75px"><svg class="ic" width="16" height="11" viewBox="0 0 16 11" ><rect x="0" y="0.2" width="5.3" height="5.8" rx="0.6" fill="#c8935a"/><rect x="1.2" y="0.9" width="3.2" height="1.1" fill="#2a1c10"/><rect x="1.4" y="2.6" width="2.8" height="2.4" fill="#d9a469"/><rect x="5.5" y="0.2" width="5.4" height="5.8" rx="0.6" fill="#9dd3ea"/><rect x="6.3" y="3.7" width="2.6" height="1" fill="#1c2a33"/><rect x="6.3" y="1.8" width="1" height="1" fill="#1c2a33"/><rect x="11.1" y="0.2" width="5.3" height="5.8" rx="0.6" fill="#bcd68c"/><path d="M12 4.8 L15.2 1.4" stroke="#141b08" stroke-width="1.5"/><rect x="2.8" y="6.1" width="5.2" height="5" rx="1.8" fill="#a99ad0"/><path d="M4 7.6h2.6M4 9.5h2.6" stroke="#6a5a9a" stroke-width="0.9"/><rect x="8.1" y="6.1" width="5.6" height="5" rx="0.6" fill="#d98683"/><rect x="8.9" y="6.8" width="3.8" height="2.9" rx="0.9" fill="#0c0606"/><circle cx="10.8" cy="7.9" r="0.5" fill="#f4b7b5"/></svg></div><div class="c t" style="left:1784px;width:75px">0</div>
</div>
<div class="row alt" style="top:120px">
<div class="c i first" style="left:0px;width:56px"><svg class="ic" width="16" height="16" viewBox="0 0 16 16" ><rect x="0.4" y="1.4" width="15.2" height="11.2" rx="1" fill="#fff" stroke="#2e2e2e" stroke-width="0.8"/>
<path d="M1.5 2.5 L6 7 Q8 8.2 10 7 L14.5 2.5 M1.5 11.5 L6 7 M14.5 11.5 L10 7" fill="none" stroke="#333" stroke-width="0.9"/>
<ellipse cx="6.4" cy="13.4" rx="2.2" ry="1.85" fill="none" stroke="#e9bd3a" stroke-width="1.5"/>
<ellipse cx="13.1" cy="13.4" rx="2.2" ry="1.85" fill="none" stroke="#4db4e6" stroke-width="1.5"/>
<path d="M6.6 13.4 H12.8" stroke="#8a8f96" stroke-width="1"/></svg></div><div class="c i" style="left:56px;width:41px"><svg class="ic" width="16" height="16" viewBox="0 0 16 16" ><path d="M0.5 15.6 Q1 11.6 5.5 11 L10 11 Q14.5 11.6 15 15.6 Q8 16.6 0.5 15.6Z" fill="#2f86d3"/>
<path d="M5.6 10.2 L6 12 Q7.7 13.6 9.6 12 L9.9 10.2Z" fill="#f4bf78"/>
<ellipse cx="7.7" cy="6.8" rx="4.1" ry="4.5" fill="#f6c47c"/>
<path d="M3.5 6.4 Q3 1.4 7.7 0.6 Q12.4 1.4 11.9 6.4 Q11 3.8 7.7 4 Q4.4 3.8 3.5 6.4Z" fill="#1d1712"/>
<path d="M11 14.6 L11.4 12.8 L14.4 9.6 L15.6 10.8 L12.7 14Z" fill="#f0a04b"/>
<path d="M14.4 9.6 L15 9 Q15.8 9 16 10.2 L15.6 10.8Z" fill="#f3e6e0"/></svg></div><div class="c i" style="left:97px;width:67px"><svg class="ic" width="16" height="16" viewBox="0 0 16 16" ><rect x="4.3" y="0.6" width="7.6" height="7.8" fill="#d9ab58" stroke="#c09240" stroke-width="0.6"/>
<rect x="0.4" y="8.3" width="7.7" height="7.4" fill="#d9ab58" stroke="#c09240" stroke-width="0.6"/>
<rect x="8.1" y="8.3" width="7.5" height="7.4" fill="#d9ab58" stroke="#c09240" stroke-width="0.6"/>
<rect x="7.6" y="0.6" width="1" height="3" fill="#8a6520"/>
<rect x="3.7" y="8.3" width="1" height="2.8" fill="#8a6520"/>
<rect x="5.4" y="5.6" width="1.6" height="1.6" fill="#b9bcc0"/><rect x="1.4" y="13" width="1.6" height="1.6" fill="#b9bcc0"/><circle cx="12" cy="12" r="3.9" fill="#86b84a"/><path d="M12 9.6V14.4M9.6 12H14.4" stroke="#e9f4dc" stroke-width="1"/></svg></div><div class="c i" style="left:164px;width:52px"></div><div class="c i" style="left:216px;width:66px"><svg class="ic" width="16" height="16" viewBox="0 0 16 16" ><circle cx="8" cy="8" r="8" fill="#8dbb3c"/><circle cx="8" cy="8" r="6.6" fill="#86b535"/><path d="M8 3.6V12.4M3.6 8H12.4" stroke="#fff" stroke-width="2.2"/></svg></div><div class="c i" style="left:282px;width:61px"><svg class="ic" width="16" height="16" viewBox="0 0 16 16" ><path d="M3.5 0 L8 4.5 L12.5 0 L16 3.5 L11.5 8 L16 12.5 L12.5 16 L8 11.5 L3.5 16 L0 12.5 L4.5 8 L0 3.5Z" fill="#8f1a10"/><path d="M3.5 0 L8 4.5 L12.5 0 L16 3.5 L15.2 4.3 Q9.5 5 4.9 7.6 L4.5 8 L0 3.5Z" fill="#9c3127"/></svg></div><div class="c i" style="left:343px;width:41px"><svg class="ic" width="16" height="16" viewBox="0 0 16 16" ><circle cx="8" cy="8" r="8" fill="#d9872b"/><circle cx="8" cy="8" r="6.6" fill="#d28026"/><path d="M8 3.6V12.4M3.6 8H12.4" stroke="#fff" stroke-width="2.2"/></svg></div><div class="c t" style="left:384px;width:30px">4</div><div class="c i" style="left:414px;width:54px"><svg class="ic" width="16" height="16" viewBox="0 0 16 16" ><path d="M5.2 15.2 H10.8 V8.4 H15.2 L8 0.6 L0.8 8.4 H5.2Z" fill="#60b05f"/></svg><span class="gap"></span><svg class="ic" width="16" height="16" viewBox="0 0 16 16" ><path d="M5.2 0.8 H10.8 V7.6 H15.2 L8 15.4 L0.8 7.6 H5.2Z" fill="#a52a25"/></svg></div><div class="c t" style="left:468px;width:126px">Portuguese</div><div class="c t" style="left:594px;width:185px">Subtitling #1 (52)</div><div class="c i" style="left:779px;width:55px"><svg class="ic" width="16" height="16" viewBox="0 0 16 16" ><g opacity="0.19"><rect x="0" y="0" width="16" height="16" rx="2.6" fill="#ffffff"/><path d="M4.6 2.2 H9.4 Q13 2.8 13 7.2 V12.4 Q13 14 11.4 14 H4.6 Q3 14 3 12.4 V3.8 Q3 2.2 4.6 2.2Z" fill="none" stroke="#000000" stroke-width="1.7"/><path d="M9.7 3.4 V5.5 H11.6" fill="none" stroke="#000000" stroke-width="1.3"/><path d="M5.4 8.6 H11" stroke="#000000" stroke-width="0.9"/><rect x="5.4" y="10.1" width="5.6" height="1.7" fill="#222222"/><path d="M4.6 4.7 H7.8" stroke="#000000" stroke-width="0.7" stroke-opacity="0.55"/></g></svg></div><div class="c t" style="left:834px;width:201px">Timing</div><div class="c t" style="left:1035px;width:183px">Flow</div><div class="c i" style="left:1218px;width:47px"><svg class="ic" width="16" height="16" viewBox="0 0 16 16" ><path d="M8 5 L3.4 11 M8 5 L12.6 11" stroke="#8d9099" stroke-width="1.5" fill="none"/><rect x="4.6" y="0.4" width="6.8" height="5" fill="#5ec5f2"/><path d="M4.6 2.9H11.4" stroke="#3f9ccc" stroke-width="0.8"/><circle cx="3.2" cy="12.4" r="3.3" fill="#f7c83a"/><circle cx="12.8" cy="12.4" r="3.3" fill="#f7c83a"/><path d="M2.4 11 V12.2 L4 13.2 M12 11 V12.2 L13.6 13.2" stroke="#7a6420" stroke-width="0.8" fill="none"/></svg></div><div class="c i" style="left:1265px;width:79px"><svg class="ic" width="16" height="16" viewBox="0 0 16 16" ><circle cx="8" cy="8" r="8" fill="#f6d532"/><path d="M5.6 3.8 L12.6 8 L5.6 12.2Z" fill="#5c4d14"/></svg></div><div class="c i" style="left:1344px;width:117px"><svg class="ic" width="16" height="16" viewBox="0 0 16 16" ><circle cx="4.2" cy="4" r="3.9" fill="#d65a1d"/><rect x="2" y="3" width="4.4" height="1.8" fill="#f6e4d8"/><circle cx="12" cy="4" r="3.9" fill="#8cc03a"/><path d="M10 4.4 L11.4 5.6 L14 2.6" fill="none" stroke="#eef6df" stroke-width="1.2"/><circle cx="4.2" cy="12" r="3.9" fill="#2453c4"/><path d="M4.2 9.4 V14.2" stroke="#dfe7fb" stroke-width="1.3"/><circle cx="12" cy="12" r="3.9" fill="#2453c4"/><text x="10.4" y="14.4" font-size="6.5" font-weight="bold" font-family="Liberation Sans, sans-serif" fill="#b9c8f0">?</text></svg></div><div class="c t res" style="left:1461px;width:248px">Portuguese Translator 2</div><div class="c i tk" style="left:1709px;width:75px"><svg class="ic" width="16" height="11" viewBox="0 0 16 11" ><rect x="0" y="0.2" width="5.3" height="5.8" rx="0.6" fill="#c8935a"/><rect x="1.2" y="0.9" width="3.2" height="1.1" fill="#2a1c10"/><rect x="1.4" y="2.6" width="2.8" height="2.4" fill="#d9a469"/><rect x="5.5" y="0.2" width="5.4" height="5.8" rx="0.6" fill="#9dd3ea"/><rect x="6.3" y="3.7" width="2.6" height="1" fill="#1c2a33"/><rect x="6.3" y="1.8" width="1" height="1" fill="#1c2a33"/><rect x="11.1" y="0.2" width="5.3" height="5.8" rx="0.6" fill="#bcd68c"/><path d="M12 4.8 L15.2 1.4" stroke="#141b08" stroke-width="1.5"/><rect x="2.8" y="6.1" width="5.2" height="5" rx="1.8" fill="#a99ad0"/><path d="M4 7.6h2.6M4 9.5h2.6" stroke="#6a5a9a" stroke-width="0.9"/><rect x="8.1" y="6.1" width="5.6" height="5" rx="0.6" fill="#d98683"/><rect x="8.9" y="6.8" width="3.8" height="2.9" rx="0.9" fill="#0c0606"/><circle cx="10.8" cy="7.9" r="0.5" fill="#f4b7b5"/></svg></div><div class="c t" style="left:1784px;width:75px">1109</div>
</div>
<div class="row hov" style="top:160px">
<div class="c i first" style="left:0px;width:56px"><svg class="ic" width="16" height="16" viewBox="0 0 16 16" ><rect x="0.4" y="1.4" width="15.2" height="11.2" rx="1" fill="#fff" stroke="#2e2e2e" stroke-width="0.8"/>
<path d="M1.5 2.5 L6 7 Q8 8.2 10 7 L14.5 2.5 M1.5 11.5 L6 7 M14.5 11.5 L10 7" fill="none" stroke="#333" stroke-width="0.9"/>
<ellipse cx="6.4" cy="13.4" rx="2.2" ry="1.85" fill="none" stroke="#e9bd3a" stroke-width="1.5"/>
<ellipse cx="13.1" cy="13.4" rx="2.2" ry="1.85" fill="none" stroke="#4db4e6" stroke-width="1.5"/>
<path d="M6.6 13.4 H12.8" stroke="#8a8f96" stroke-width="1"/></svg></div><div class="c i" style="left:56px;width:41px"><svg class="ic" width="16" height="16" viewBox="0 0 16 16" ><path d="M0.5 15.6 Q1 11.6 5.5 11 L10 11 Q14.5 11.6 15 15.6 Q8 16.6 0.5 15.6Z" fill="#2f86d3"/>
<path d="M5.6 10.2 L6 12 Q7.7 13.6 9.6 12 L9.9 10.2Z" fill="#f4bf78"/>
<ellipse cx="7.7" cy="6.8" rx="4.1" ry="4.5" fill="#f6c47c"/>
<path d="M3.5 6.4 Q3 1.4 7.7 0.6 Q12.4 1.4 11.9 6.4 Q11 3.8 7.7 4 Q4.4 3.8 3.5 6.4Z" fill="#1d1712"/>
<path d="M11 14.6 L11.4 12.8 L14.4 9.6 L15.6 10.8 L12.7 14Z" fill="#f0a04b"/>
<path d="M14.4 9.6 L15 9 Q15.8 9 16 10.2 L15.6 10.8Z" fill="#f3e6e0"/></svg></div><div class="c i" style="left:97px;width:67px"><svg class="ic" width="16" height="16" viewBox="0 0 16 16" ><rect x="4.3" y="0.6" width="7.6" height="7.8" fill="#d9ab58" stroke="#c09240" stroke-width="0.6"/>
<rect x="0.4" y="8.3" width="7.7" height="7.4" fill="#d9ab58" stroke="#c09240" stroke-width="0.6"/>
<rect x="8.1" y="8.3" width="7.5" height="7.4" fill="#d9ab58" stroke="#c09240" stroke-width="0.6"/>
<rect x="7.6" y="0.6" width="1" height="3" fill="#8a6520"/>
<rect x="3.7" y="8.3" width="1" height="2.8" fill="#8a6520"/>
<rect x="5.4" y="5.6" width="1.6" height="1.6" fill="#b9bcc0"/><rect x="1.4" y="13" width="1.6" height="1.6" fill="#b9bcc0"/><circle cx="12" cy="12" r="3.9" fill="#86b84a"/><path d="M12 9.6V14.4M9.6 12H14.4" stroke="#e9f4dc" stroke-width="1"/></svg></div><div class="c i" style="left:164px;width:52px"></div><div class="c i" style="left:216px;width:66px"><svg class="ic" width="16" height="16" viewBox="0 0 16 16" ><circle cx="8" cy="8" r="8" fill="#8dbb3c"/><circle cx="8" cy="8" r="6.6" fill="#86b535"/><path d="M8 3.6V12.4M3.6 8H12.4" stroke="#fff" stroke-width="2.2"/></svg></div><div class="c i" style="left:282px;width:61px"><svg class="ic" width="16" height="16" viewBox="0 0 16 16" ><path d="M3.5 0 L8 4.5 L12.5 0 L16 3.5 L11.5 8 L16 12.5 L12.5 16 L8 11.5 L3.5 16 L0 12.5 L4.5 8 L0 3.5Z" fill="#8f1a10"/><path d="M3.5 0 L8 4.5 L12.5 0 L16 3.5 L15.2 4.3 Q9.5 5 4.9 7.6 L4.5 8 L0 3.5Z" fill="#9c3127"/></svg></div><div class="c i" style="left:343px;width:41px"><svg class="ic" width="16" height="16" viewBox="0 0 16 16" ><circle cx="8" cy="8" r="8" fill="#d9872b"/><circle cx="8" cy="8" r="6.6" fill="#d28026"/><path d="M8 3.6V12.4M3.6 8H12.4" stroke="#fff" stroke-width="2.2"/></svg></div><div class="c t" style="left:384px;width:30px">5</div><div class="c i" style="left:414px;width:54px"><svg class="ic" width="16" height="16" viewBox="0 0 16 16" ><path d="M5.2 15.2 H10.8 V8.4 H15.2 L8 0.6 L0.8 8.4 H5.2Z" fill="#60b05f"/></svg></div><div class="c t" style="left:468px;width:126px">Portuguese</div><div class="c t" style="left:594px;width:185px">Subtitling #1 (52)</div><div class="c i" style="left:779px;width:55px"><svg class="ic" width="16" height="16" viewBox="0 0 16 16" ><g opacity="0.19"><rect x="0" y="0" width="16" height="16" rx="2.6" fill="#ffffff"/><path d="M4.6 2.2 H9.4 Q13 2.8 13 7.2 V12.4 Q13 14 11.4 14 H4.6 Q3 14 3 12.4 V3.8 Q3 2.2 4.6 2.2Z" fill="none" stroke="#000000" stroke-width="1.7"/><path d="M9.7 3.4 V5.5 H11.6" fill="none" stroke="#000000" stroke-width="1.3"/><path d="M5.4 8.6 H11" stroke="#000000" stroke-width="0.9"/><rect x="5.4" y="10.1" width="5.6" height="1.7" fill="#222222"/><path d="M4.6 4.7 H7.8" stroke="#000000" stroke-width="0.7" stroke-opacity="0.55"/></g></svg></div><div class="c t" style="left:834px;width:201px">QC</div><div class="c t" style="left:1035px;width:183px">Flow</div><div class="c i" style="left:1218px;width:47px"><svg class="ic" width="16" height="16" viewBox="0 0 16 16" ><path d="M8 5 L3.4 11 M8 5 L12.6 11" stroke="#8d9099" stroke-width="1.5" fill="none"/><rect x="4.6" y="0.4" width="6.8" height="5" fill="#a9a9a9"/><path d="M4.6 2.9H11.4" stroke="#8a8a8a" stroke-width="0.8"/><circle cx="3.2" cy="12.4" r="3.3" fill="#d8d8d8"/><circle cx="12.8" cy="12.4" r="3.3" fill="#d8d8d8"/><path d="M2.4 11 V12.2 L4 13.2 M12 11 V12.2 L13.6 13.2" stroke="#8a8a8a" stroke-width="0.8" fill="none"/></svg></div><div class="c i" style="left:1265px;width:79px"><svg class="ic" width="16" height="16" viewBox="0 0 16 16" ><circle cx="8" cy="8" r="8" fill="#f6d532"/><path d="M5.6 3.8 L12.6 8 L5.6 12.2Z" fill="#5c4d14"/></svg></div><div class="c i" style="left:1344px;width:117px"><svg class="ic" width="16" height="16" viewBox="0 0 16 16" ><circle cx="4.2" cy="4" r="3.9" fill="#d65a1d"/><rect x="2" y="3" width="4.4" height="1.8" fill="#f6e4d8"/><circle cx="12" cy="4" r="3.9" fill="#8cc03a"/><path d="M10 4.4 L11.4 5.6 L14 2.6" fill="none" stroke="#eef6df" stroke-width="1.2"/><circle cx="4.2" cy="12" r="3.9" fill="#2453c4"/><path d="M4.2 9.4 V14.2" stroke="#dfe7fb" stroke-width="1.3"/><circle cx="12" cy="12" r="3.9" fill="#2453c4"/><text x="10.4" y="14.4" font-size="6.5" font-weight="bold" font-family="Liberation Sans, sans-serif" fill="#b9c8f0">?</text></svg></div><div class="c t res" style="left:1461px;width:248px">Portuguese QCer</div><div class="c i tk" style="left:1709px;width:75px"><svg class="ic" width="16" height="11" viewBox="0 0 16 11" ><rect x="0" y="0.2" width="5.3" height="5.8" rx="0.6" fill="#c8935a"/><rect x="1.2" y="0.9" width="3.2" height="1.1" fill="#2a1c10"/><rect x="1.4" y="2.6" width="2.8" height="2.4" fill="#d9a469"/><rect x="5.5" y="0.2" width="5.4" height="5.8" rx="0.6" fill="#9dd3ea"/><rect x="6.3" y="3.7" width="2.6" height="1" fill="#1c2a33"/><rect x="6.3" y="1.8" width="1" height="1" fill="#1c2a33"/><rect x="11.1" y="0.2" width="5.3" height="5.8" rx="0.6" fill="#bcd68c"/><path d="M12 4.8 L15.2 1.4" stroke="#141b08" stroke-width="1.5"/><rect x="2.8" y="6.1" width="5.2" height="5" rx="1.8" fill="#a99ad0"/><path d="M4 7.6h2.6M4 9.5h2.6" stroke="#6a5a9a" stroke-width="0.9"/><rect x="8.1" y="6.1" width="5.6" height="5" rx="0.6" fill="#d98683"/><rect x="8.9" y="6.8" width="3.8" height="2.9" rx="0.9" fill="#0c0606"/><circle cx="10.8" cy="7.9" r="0.5" fill="#f4b7b5"/></svg></div><div class="c t" style="left:1784px;width:75px">1108</div>
</div>
<div class="row alt" style="top:200px">
<div class="c i first" style="left:0px;width:56px"><svg class="ic" width="16" height="16" viewBox="0 0 16 16" ><rect x="0.4" y="1.4" width="15.2" height="11.2" rx="1" fill="#fff" stroke="#2e2e2e" stroke-width="0.8"/>
<path d="M1.5 2.5 L6 7 Q8 8.2 10 7 L14.5 2.5 M1.5 11.5 L6 7 M14.5 11.5 L10 7" fill="none" stroke="#333" stroke-width="0.9"/>
<ellipse cx="6.4" cy="13.4" rx="2.2" ry="1.85" fill="none" stroke="#e9bd3a" stroke-width="1.5"/>
<ellipse cx="13.1" cy="13.4" rx="2.2" ry="1.85" fill="none" stroke="#4db4e6" stroke-width="1.5"/>
<path d="M6.6 13.4 H12.8" stroke="#8a8f96" stroke-width="1"/></svg></div><div class="c i" style="left:56px;width:41px"><svg class="ic" width="16" height="16" viewBox="0 0 16 16" ><path d="M0.5 15.6 Q1 11.6 5.5 11 L10 11 Q14.5 11.6 15 15.6 Q8 16.6 0.5 15.6Z" fill="#2f86d3"/>
<path d="M5.6 10.2 L6 12 Q7.7 13.6 9.6 12 L9.9 10.2Z" fill="#f4bf78"/>
<ellipse cx="7.7" cy="6.8" rx="4.1" ry="4.5" fill="#f6c47c"/>
<path d="M3.5 6.4 Q3 1.4 7.7 0.6 Q12.4 1.4 11.9 6.4 Q11 3.8 7.7 4 Q4.4 3.8 3.5 6.4Z" fill="#1d1712"/>
<path d="M11 14.6 L11.4 12.8 L14.4 9.6 L15.6 10.8 L12.7 14Z" fill="#f0a04b"/>
<path d="M14.4 9.6 L15 9 Q15.8 9 16 10.2 L15.6 10.8Z" fill="#f3e6e0"/></svg></div><div class="c i" style="left:97px;width:67px"><svg class="ic" width="16" height="16" viewBox="0 0 16 16" ><rect x="4.3" y="0.6" width="7.6" height="7.8" fill="#d9ab58" stroke="#c09240" stroke-width="0.6"/>
<rect x="0.4" y="8.3" width="7.7" height="7.4" fill="#d9ab58" stroke="#c09240" stroke-width="0.6"/>
<rect x="8.1" y="8.3" width="7.5" height="7.4" fill="#d9ab58" stroke="#c09240" stroke-width="0.6"/>
<rect x="7.6" y="0.6" width="1" height="3" fill="#8a6520"/>
<rect x="3.7" y="8.3" width="1" height="2.8" fill="#8a6520"/>
<rect x="5.4" y="5.6" width="1.6" height="1.6" fill="#b9bcc0"/><rect x="1.4" y="13" width="1.6" height="1.6" fill="#b9bcc0"/><circle cx="12" cy="12" r="3.9" fill="#86b84a"/><path d="M12 9.6V14.4M9.6 12H14.4" stroke="#e9f4dc" stroke-width="1"/></svg></div><div class="c i" style="left:164px;width:52px"><svg class="ic" width="16" height="16" viewBox="0 0 16 16" ><rect x="4.3" y="0.6" width="7.6" height="7.8" fill="#d9ab58" stroke="#c09240" stroke-width="0.6"/>
<rect x="0.4" y="8.3" width="7.7" height="7.4" fill="#d9ab58" stroke="#c09240" stroke-width="0.6"/>
<rect x="8.1" y="8.3" width="7.5" height="7.4" fill="#d9ab58" stroke="#c09240" stroke-width="0.6"/>
<rect x="7.6" y="0.6" width="1" height="3" fill="#8a6520"/>
<rect x="3.7" y="8.3" width="1" height="2.8" fill="#8a6520"/>
<rect x="5.4" y="5.6" width="1.6" height="1.6" fill="#b9bcc0"/><rect x="1.4" y="13" width="1.6" height="1.6" fill="#b9bcc0"/><path d="M9.2 9.4 L15.4 15.4 M15.4 9.4 L9.2 15.4" stroke="#a3170f" stroke-width="2.6"/></svg></div><div class="c i" style="left:216px;width:66px"><svg class="ic" width="16" height="16" viewBox="0 0 16 16" ><circle cx="8" cy="8" r="8" fill="#8dbb3c"/><circle cx="8" cy="8" r="6.6" fill="#86b535"/><path d="M8 3.6V12.4M3.6 8H12.4" stroke="#fff" stroke-width="2.2"/></svg></div><div class="c i" style="left:282px;width:61px"><svg class="ic" width="16" height="16" viewBox="0 0 16 16" ><path d="M3.5 0 L8 4.5 L12.5 0 L16 3.5 L11.5 8 L16 12.5 L12.5 16 L8 11.5 L3.5 16 L0 12.5 L4.5 8 L0 3.5Z" fill="#8f1a10"/><path d="M3.5 0 L8 4.5 L12.5 0 L16 3.5 L15.2 4.3 Q9.5 5 4.9 7.6 L4.5 8 L0 3.5Z" fill="#9c3127"/></svg></div><div class="c i" style="left:343px;width:41px"><svg class="ic" width="16" height="16" viewBox="0 0 16 16" ><circle cx="8" cy="8" r="8" fill="#d9872b"/><circle cx="8" cy="8" r="6.6" fill="#d28026"/><path d="M8 3.6V12.4M3.6 8H12.4" stroke="#fff" stroke-width="2.2"/></svg></div><div class="c t" style="left:384px;width:30px">6</div><div class="c i" style="left:414px;width:54px"><svg class="ic" width="16" height="16" viewBox="0 0 16 16" ><path d="M5.2 0.8 H10.8 V7.6 H15.2 L8 15.4 L0.8 7.6 H5.2Z" fill="#a52a25"/></svg></div><div class="c t" style="left:468px;width:126px">Spanish</div><div class="c t" style="left:594px;width:185px">Subtitling #1 (52)</div><div class="c i" style="left:779px;width:55px"><svg class="ic" width="16" height="16" viewBox="0 0 16 16" ><rect x="0" y="0" width="16" height="16" rx="2.6" fill="#cdeefa"/><path d="M8.8 3.7 Q12.6 3 13.3 6.4" fill="none" stroke="#050505" stroke-width="1.9" stroke-linecap="round"/><path d="M2.7 10 Q3.2 13 7 12.4" fill="none" stroke="#050505" stroke-width="1.9" stroke-linecap="round"/><path d="M4 3.2 L4.4 5.2 Q6 7.4 9.2 7.6 M2.6 6.6 L4.2 5.2" fill="none" stroke="#1c2a30" stroke-width="0.8"/><text x="9.3" y="13" font-size="5.4" font-family="Liberation Sans, sans-serif" fill="#6c8089">IS</text></svg></div><div class="c t" style="left:834px;width:201px">Translation</div><div class="c t" style="left:1035px;width:183px">All pre production tasks ...</div><div class="c i" style="left:1218px;width:47px"><svg class="ic" width="16" height="16" viewBox="0 0 16 16" ><path d="M8 5 L3.4 11 M8 5 L12.6 11" stroke="#8d9099" stroke-width="1.5" fill="none"/><rect x="4.6" y="0.4" width="6.8" height="5" fill="#5ec5f2"/><path d="M4.6 2.9H11.4" stroke="#3f9ccc" stroke-width="0.8"/><circle cx="3.2" cy="12.4" r="3.3" fill="#f7c83a"/><circle cx="12.8" cy="12.4" r="3.3" fill="#f7c83a"/><path d="M2.4 11 V12.2 L4 13.2 M12 11 V12.2 L13.6 13.2" stroke="#7a6420" stroke-width="0.8" fill="none"/></svg></div><div class="c i" style="left:1265px;width:79px"><svg class="ic" width="16" height="16" viewBox="0 0 16 16" ><circle cx="8" cy="8" r="8" fill="#f6d532"/><path d="M5.6 3.8 L12.6 8 L5.6 12.2Z" fill="#5c4d14"/></svg></div><div class="c i" style="left:1344px;width:117px"><svg class="ic" width="16" height="16" viewBox="0 0 16 16" ><circle cx="8" cy="8" r="8" fill="#cbcbcb"/></svg></div><div class="c t res" style="left:1461px;width:248px"></div><div class="c i tk" style="left:1709px;width:75px"><svg class="ic" width="16" height="11" viewBox="0 0 16 11" ><rect x="0" y="0.2" width="5.3" height="5.8" rx="0.6" fill="#c8935a"/><rect x="1.2" y="0.9" width="3.2" height="1.1" fill="#2a1c10"/><rect x="1.4" y="2.6" width="2.8" height="2.4" fill="#d9a469"/><rect x="5.5" y="0.2" width="5.4" height="5.8" rx="0.6" fill="#9dd3ea"/><rect x="6.3" y="3.7" width="2.6" height="1" fill="#1c2a33"/><rect x="6.3" y="1.8" width="1" height="1" fill="#1c2a33"/><rect x="11.1" y="0.2" width="5.3" height="5.8" rx="0.6" fill="#bcd68c"/><path d="M12 4.8 L15.2 1.4" stroke="#141b08" stroke-width="1.5"/><rect x="2.8" y="6.1" width="5.2" height="5" rx="1.8" fill="#a99ad0"/><path d="M4 7.6h2.6M4 9.5h2.6" stroke="#6a5a9a" stroke-width="0.9"/><rect x="8.1" y="6.1" width="5.6" height="5" rx="0.6" fill="#d98683"/><rect x="8.9" y="6.8" width="3.8" height="2.9" rx="0.9" fill="#0c0606"/><circle cx="10.8" cy="7.9" r="0.5" fill="#f4b7b5"/></svg></div><div class="c t" style="left:1784px;width:75px">0</div>
</div>
<div class="row " style="top:240px">
<div class="c i first" style="left:0px;width:56px"><svg class="ic" width="16" height="16" viewBox="0 0 16 16" ><rect x="0.4" y="1.4" width="15.2" height="11.2" rx="1" fill="#fff" stroke="#2e2e2e" stroke-width="0.8"/>
<path d="M1.5 2.5 L6 7 Q8 8.2 10 7 L14.5 2.5 M1.5 11.5 L6 7 M14.5 11.5 L10 7" fill="none" stroke="#333" stroke-width="0.9"/>
<ellipse cx="6.4" cy="13.4" rx="2.2" ry="1.85" fill="none" stroke="#e9bd3a" stroke-width="1.5"/>
<ellipse cx="13.1" cy="13.4" rx="2.2" ry="1.85" fill="none" stroke="#4db4e6" stroke-width="1.5"/>
<path d="M6.6 13.4 H12.8" stroke="#8a8f96" stroke-width="1"/></svg></div><div class="c i" style="left:56px;width:41px"><svg class="ic" width="16" height="16" viewBox="0 0 16 16" ><path d="M0.5 15.6 Q1 11.6 5.5 11 L10 11 Q14.5 11.6 15 15.6 Q8 16.6 0.5 15.6Z" fill="#2f86d3"/>
<path d="M5.6 10.2 L6 12 Q7.7 13.6 9.6 12 L9.9 10.2Z" fill="#f4bf78"/>
<ellipse cx="7.7" cy="6.8" rx="4.1" ry="4.5" fill="#f6c47c"/>
<path d="M3.5 6.4 Q3 1.4 7.7 0.6 Q12.4 1.4 11.9 6.4 Q11 3.8 7.7 4 Q4.4 3.8 3.5 6.4Z" fill="#1d1712"/>
<path d="M11 14.6 L11.4 12.8 L14.4 9.6 L15.6 10.8 L12.7 14Z" fill="#f0a04b"/>
<path d="M14.4 9.6 L15 9 Q15.8 9 16 10.2 L15.6 10.8Z" fill="#f3e6e0"/></svg></div><div class="c i" style="left:97px;width:67px"><svg class="ic" width="16" height="16" viewBox="0 0 16 16" ><rect x="4.3" y="0.6" width="7.6" height="7.8" fill="#d9ab58" stroke="#c09240" stroke-width="0.6"/>
<rect x="0.4" y="8.3" width="7.7" height="7.4" fill="#d9ab58" stroke="#c09240" stroke-width="0.6"/>
<rect x="8.1" y="8.3" width="7.5" height="7.4" fill="#d9ab58" stroke="#c09240" stroke-width="0.6"/>
<rect x="7.6" y="0.6" width="1" height="3" fill="#8a6520"/>
<rect x="3.7" y="8.3" width="1" height="2.8" fill="#8a6520"/>
<rect x="5.4" y="5.6" width="1.6" height="1.6" fill="#b9bcc0"/><rect x="1.4" y="13" width="1.6" height="1.6" fill="#b9bcc0"/><circle cx="12" cy="12" r="3.9" fill="#86b84a"/><path d="M12 9.6V14.4M9.6 12H14.4" stroke="#e9f4dc" stroke-width="1"/></svg></div><div class="c i" style="left:164px;width:52px"></div><div class="c i" style="left:216px;width:66px"><svg class="ic" width="16" height="16" viewBox="0 0 16 16" ><circle cx="8" cy="8" r="8" fill="#8dbb3c"/><circle cx="8" cy="8" r="6.6" fill="#86b535"/><path d="M8 3.6V12.4M3.6 8H12.4" stroke="#fff" stroke-width="2.2"/></svg></div><div class="c i" style="left:282px;width:61px"><svg class="ic" width="16" height="16" viewBox="0 0 16 16" ><path d="M3.5 0 L8 4.5 L12.5 0 L16 3.5 L11.5 8 L16 12.5 L12.5 16 L8 11.5 L3.5 16 L0 12.5 L4.5 8 L0 3.5Z" fill="#8f1a10"/><path d="M3.5 0 L8 4.5 L12.5 0 L16 3.5 L15.2 4.3 Q9.5 5 4.9 7.6 L4.5 8 L0 3.5Z" fill="#9c3127"/></svg></div><div class="c i" style="left:343px;width:41px"><svg class="ic" width="16" height="16" viewBox="0 0 16 16" ><circle cx="8" cy="8" r="8" fill="#d9872b"/><circle cx="8" cy="8" r="6.6" fill="#d28026"/><path d="M8 3.6V12.4M3.6 8H12.4" stroke="#fff" stroke-width="2.2"/></svg></div><div class="c t" style="left:384px;width:30px">7</div><div class="c i" style="left:414px;width:54px"><svg class="ic" width="16" height="16" viewBox="0 0 16 16" ><path d="M5.2 15.2 H10.8 V8.4 H15.2 L8 0.6 L0.8 8.4 H5.2Z" fill="#60b05f"/></svg><span class="gap"></span><svg class="ic" width="16" height="16" viewBox="0 0 16 16" ><path d="M5.2 0.8 H10.8 V7.6 H15.2 L8 15.4 L0.8 7.6 H5.2Z" fill="#a52a25"/></svg></div><div class="c t" style="left:468px;width:126px">Spanish</div><div class="c t" style="left:594px;width:185px">Subtitling #1 (52)</div><div class="c i" style="left:779px;width:55px"><svg class="ic" width="16" height="16" viewBox="0 0 16 16" ><g opacity="0.19"><rect x="0" y="0" width="16" height="16" rx="2.6" fill="#ffffff"/><path d="M4.6 2.2 H9.4 Q13 2.8 13 7.2 V12.4 Q13 14 11.4 14 H4.6 Q3 14 3 12.4 V3.8 Q3 2.2 4.6 2.2Z" fill="none" stroke="#000000" stroke-width="1.7"/><path d="M9.7 3.4 V5.5 H11.6" fill="none" stroke="#000000" stroke-width="1.3"/><path d="M5.4 8.6 H11" stroke="#000000" stroke-width="0.9"/><rect x="5.4" y="10.1" width="5.6" height="1.7" fill="#222222"/><path d="M4.6 4.7 H7.8" stroke="#000000" stroke-width="0.7" stroke-opacity="0.55"/></g></svg></div><div class="c t" style="left:834px;width:201px">Timing</div><div class="c t" style="left:1035px;width:183px">Flow</div><div class="c i" style="left:1218px;width:47px"><svg class="ic" width="16" height="16" viewBox="0 0 16 16" ><path d="M8 5 L3.4 11 M8 5 L12.6 11" stroke="#8d9099" stroke-width="1.5" fill="none"/><rect x="4.6" y="0.4" width="6.8" height="5" fill="#5ec5f2"/><path d="M4.6 2.9H11.4" stroke="#3f9ccc" stroke-width="0.8"/><circle cx="3.2" cy="12.4" r="3.3" fill="#f7c83a"/><circle cx="12.8" cy="12.4" r="3.3" fill="#f7c83a"/><path d="M2.4 11 V12.2 L4 13.2 M12 11 V12.2 L13.6 13.2" stroke="#7a6420" stroke-width="0.8" fill="none"/></svg></div><div class="c i" style="left:1265px;width:79px"><svg class="ic" width="16" height="16" viewBox="0 0 16 16" ><circle cx="8" cy="8" r="8" fill="#f6d532"/><path d="M5.6 3.8 L12.6 8 L5.6 12.2Z" fill="#5c4d14"/></svg></div><div class="c i" style="left:1344px;width:117px"><svg class="ic" width="16" height="16" viewBox="0 0 16 16" ><circle cx="8" cy="8" r="8" fill="#cbcbcb"/></svg></div><div class="c t res" style="left:1461px;width:248px"></div><div class="c i tk" style="left:1709px;width:75px"><svg class="ic" width="16" height="11" viewBox="0 0 16 11" ><rect x="0" y="0.2" width="5.3" height="5.8" rx="0.6" fill="#c8935a"/><rect x="1.2" y="0.9" width="3.2" height="1.1" fill="#2a1c10"/><rect x="1.4" y="2.6" width="2.8" height="2.4" fill="#d9a469"/><rect x="5.5" y="0.2" width="5.4" height="5.8" rx="0.6" fill="#9dd3ea"/><rect x="6.3" y="3.7" width="2.6" height="1" fill="#1c2a33"/><rect x="6.3" y="1.8" width="1" height="1" fill="#1c2a33"/><rect x="11.1" y="0.2" width="5.3" height="5.8" rx="0.6" fill="#bcd68c"/><path d="M12 4.8 L15.2 1.4" stroke="#141b08" stroke-width="1.5"/><rect x="2.8" y="6.1" width="5.2" height="5" rx="1.8" fill="#a99ad0"/><path d="M4 7.6h2.6M4 9.5h2.6" stroke="#6a5a9a" stroke-width="0.9"/><rect x="8.1" y="6.1" width="5.6" height="5" rx="0.6" fill="#d98683"/><rect x="8.9" y="6.8" width="3.8" height="2.9" rx="0.9" fill="#0c0606"/><circle cx="10.8" cy="7.9" r="0.5" fill="#f4b7b5"/></svg></div><div class="c t" style="left:1784px;width:75px">0</div>
</div>
<div class="row alt" style="top:280px">
<div class="c i first" style="left:0px;width:56px"><svg class="ic" width="16" height="16" viewBox="0 0 16 16" ><rect x="0.4" y="1.4" width="15.2" height="11.2" rx="1" fill="#fff" stroke="#2e2e2e" stroke-width="0.8"/>
<path d="M1.5 2.5 L6 7 Q8 8.2 10 7 L14.5 2.5 M1.5 11.5 L6 7 M14.5 11.5 L10 7" fill="none" stroke="#333" stroke-width="0.9"/>
<ellipse cx="6.4" cy="13.4" rx="2.2" ry="1.85" fill="none" stroke="#e9bd3a" stroke-width="1.5"/>
<ellipse cx="13.1" cy="13.4" rx="2.2" ry="1.85" fill="none" stroke="#4db4e6" stroke-width="1.5"/>
<path d="M6.6 13.4 H12.8" stroke="#8a8f96" stroke-width="1"/></svg></div><div class="c i" style="left:56px;width:41px"><svg class="ic" width="16" height="16" viewBox="0 0 16 16" ><path d="M0.5 15.6 Q1 11.6 5.5 11 L10 11 Q14.5 11.6 15 15.6 Q8 16.6 0.5 15.6Z" fill="#2f86d3"/>
<path d="M5.6 10.2 L6 12 Q7.7 13.6 9.6 12 L9.9 10.2Z" fill="#f4bf78"/>
<ellipse cx="7.7" cy="6.8" rx="4.1" ry="4.5" fill="#f6c47c"/>
<path d="M3.5 6.4 Q3 1.4 7.7 0.6 Q12.4 1.4 11.9 6.4 Q11 3.8 7.7 4 Q4.4 3.8 3.5 6.4Z" fill="#1d1712"/>
<path d="M11 14.6 L11.4 12.8 L14.4 9.6 L15.6 10.8 L12.7 14Z" fill="#f0a04b"/>
<path d="M14.4 9.6 L15 9 Q15.8 9 16 10.2 L15.6 10.8Z" fill="#f3e6e0"/></svg></div><div class="c i" style="left:97px;width:67px"><svg class="ic" width="16" height="16" viewBox="0 0 16 16" ><rect x="4.3" y="0.6" width="7.6" height="7.8" fill="#d9ab58" stroke="#c09240" stroke-width="0.6"/>
<rect x="0.4" y="8.3" width="7.7" height="7.4" fill="#d9ab58" stroke="#c09240" stroke-width="0.6"/>
<rect x="8.1" y="8.3" width="7.5" height="7.4" fill="#d9ab58" stroke="#c09240" stroke-width="0.6"/>
<rect x="7.6" y="0.6" width="1" height="3" fill="#8a6520"/>
<rect x="3.7" y="8.3" width="1" height="2.8" fill="#8a6520"/>
<rect x="5.4" y="5.6" width="1.6" height="1.6" fill="#b9bcc0"/><rect x="1.4" y="13" width="1.6" height="1.6" fill="#b9bcc0"/><circle cx="12" cy="12" r="3.9" fill="#86b84a"/><path d="M12 9.6V14.4M9.6 12H14.4" stroke="#e9f4dc" stroke-width="1"/></svg></div><div class="c i" style="left:164px;width:52px"></div><div class="c i" style="left:216px;width:66px"><svg class="ic" width="16" height="16" viewBox="0 0 16 16" ><circle cx="8" cy="8" r="8" fill="#8dbb3c"/><circle cx="8" cy="8" r="6.6" fill="#86b535"/><path d="M8 3.6V12.4M3.6 8H12.4" stroke="#fff" stroke-width="2.2"/></svg></div><div class="c i" style="left:282px;width:61px"><svg class="ic" width="16" height="16" viewBox="0 0 16 16" ><path d="M3.5 0 L8 4.5 L12.5 0 L16 3.5 L11.5 8 L16 12.5 L12.5 16 L8 11.5 L3.5 16 L0 12.5 L4.5 8 L0 3.5Z" fill="#8f1a10"/><path d="M3.5 0 L8 4.5 L12.5 0 L16 3.5 L15.2 4.3 Q9.5 5 4.9 7.6 L4.5 8 L0 3.5Z" fill="#9c3127"/></svg></div><div class="c i" style="left:343px;width:41px"><svg class="ic" width="16" height="16" viewBox="0 0 16 16" ><circle cx="8" cy="8" r="8" fill="#d9872b"/><circle cx="8" cy="8" r="6.6" fill="#d28026"/><path d="M8 3.6V12.4M3.6 8H12.4" stroke="#fff" stroke-width="2.2"/></svg></div><div class="c t" style="left:384px;width:30px">8</div><div class="c i" style="left:414px;width:54px"><svg class="ic" width="16" height="16" viewBox="0 0 16 16" ><path d="M5.2 15.2 H10.8 V8.4 H15.2 L8 0.6 L0.8 8.4 H5.2Z" fill="#60b05f"/></svg></div><div class="c t" style="left:468px;width:126px">Spanish</div><div class="c t" style="left:594px;width:185px">Subtitling #1 (52)</div><div class="c i" style="left:779px;width:55px"><svg class="ic" width="16" height="16" viewBox="0 0 16 16" ><g opacity="0.19"><rect x="0" y="0" width="16" height="16" rx="2.6" fill="#ffffff"/><path d="M4.6 2.2 H9.4 Q13 2.8 13 7.2 V12.4 Q13 14 11.4 14 H4.6 Q3 14 3 12.4 V3.8 Q3 2.2 4.6 2.2Z" fill="none" stroke="#000000" stroke-width="1.7"/><path d="M9.7 3.4 V5.5 H11.6" fill="none" stroke="#000000" stroke-width="1.3"/><path d="M5.4 8.6 H11" stroke="#000000" stroke-width="0.9"/><rect x="5.4" y="10.1" width="5.6" height="1.7" fill="#222222"/><path d="M4.6 4.7 H7.8" stroke="#000000" stroke-width="0.7" stroke-opacity="0.55"/></g></svg></div><div class="c t" style="left:834px;width:201px">QC</div><div class="c t" style="left:1035px;width:183px">Flow</div><div class="c i" style="left:1218px;width:47px"><svg class="ic" width="16" height="16" viewBox="0 0 16 16" ><path d="M8 5 L3.4 11 M8 5 L12.6 11" stroke="#8d9099" stroke-width="1.5" fill="none"/><rect x="4.6" y="0.4" width="6.8" height="5" fill="#a9a9a9"/><path d="M4.6 2.9H11.4" stroke="#8a8a8a" stroke-width="0.8"/><circle cx="3.2" cy="12.4" r="3.3" fill="#d8d8d8"/><circle cx="12.8" cy="12.4" r="3.3" fill="#d8d8d8"/><path d="M2.4 11 V12.2 L4 13.2 M12 11 V12.2 L13.6 13.2" stroke="#8a8a8a" stroke-width="0.8" fill="none"/></svg></div><div class="c i" style="left:1265px;width:79px"><svg class="ic" width="16" height="16" viewBox="0 0 16 16" ><circle cx="8" cy="8" r="8" fill="#f6d532"/><path d="M5.6 3.8 L12.6 8 L5.6 12.2Z" fill="#5c4d14"/></svg></div><div class="c i" style="left:1344px;width:117px"><svg class="ic" width="16" height="16" viewBox="0 0 16 16" ><circle cx="8" cy="8" r="8" fill="#cbcbcb"/></svg></div><div class="c t res" style="left:1461px;width:248px"></div><div class="c i tk" style="left:1709px;width:75px"><svg class="ic" width="16" height="11" viewBox="0 0 16 11" ><rect x="0" y="0.2" width="5.3" height="5.8" rx="0.6" fill="#c8935a"/><rect x="1.2" y="0.9" width="3.2" height="1.1" fill="#2a1c10"/><rect x="1.4" y="2.6" width="2.8" height="2.4" fill="#d9a469"/><rect x="5.5" y="0.2" width="5.4" height="5.8" rx="0.6" fill="#9dd3ea"/><rect x="6.3" y="3.7" width="2.6" height="1" fill="#1c2a33"/><rect x="6.3" y="1.8" width="1" height="1" fill="#1c2a33"/><rect x="11.1" y="0.2" width="5.3" height="5.8" rx="0.6" fill="#bcd68c"/><path d="M12 4.8 L15.2 1.4" stroke="#141b08" stroke-width="1.5"/><rect x="2.8" y="6.1" width="5.2" height="5" rx="1.8" fill="#a99ad0"/><path d="M4 7.6h2.6M4 9.5h2.6" stroke="#6a5a9a" stroke-width="0.9"/><rect x="8.1" y="6.1" width="5.6" height="5" rx="0.6" fill="#d98683"/><rect x="8.9" y="6.8" width="3.8" height="2.9" rx="0.9" fill="#0c0606"/><circle cx="10.8" cy="7.9" r="0.5" fill="#f4b7b5"/></svg></div><div class="c t" style="left:1784px;width:75px">0</div>
</div>
<div class="row " style="top:320px">
<div class="c i first" style="left:0px;width:56px"><svg class="ic" width="16" height="16" viewBox="0 0 16 16" ><rect x="0.4" y="1.4" width="15.2" height="11.2" rx="1" fill="#fff" stroke="#2e2e2e" stroke-width="0.8"/>
<path d="M1.5 2.5 L6 7 Q8 8.2 10 7 L14.5 2.5 M1.5 11.5 L6 7 M14.5 11.5 L10 7" fill="none" stroke="#333" stroke-width="0.9"/>
<ellipse cx="6.4" cy="13.4" rx="2.2" ry="1.85" fill="none" stroke="#e9bd3a" stroke-width="1.5"/>
<ellipse cx="13.1" cy="13.4" rx="2.2" ry="1.85" fill="none" stroke="#4db4e6" stroke-width="1.5"/>
<path d="M6.6 13.4 H12.8" stroke="#8a8f96" stroke-width="1"/></svg></div><div class="c i" style="left:56px;width:41px"><svg class="ic" width="16" height="16" viewBox="0 0 16 16" ><path d="M0.5 15.6 Q1 11.6 5.5 11 L10 11 Q14.5 11.6 15 15.6 Q8 16.6 0.5 15.6Z" fill="#2f86d3"/>
<path d="M5.6 10.2 L6 12 Q7.7 13.6 9.6 12 L9.9 10.2Z" fill="#f4bf78"/>
<ellipse cx="7.7" cy="6.8" rx="4.1" ry="4.5" fill="#f6c47c"/>
<path d="M3.5 6.4 Q3 1.4 7.7 0.6 Q12.4 1.4 11.9 6.4 Q11 3.8 7.7 4 Q4.4 3.8 3.5 6.4Z" fill="#1d1712"/>
<path d="M11 14.6 L11.4 12.8 L14.4 9.6 L15.6 10.8 L12.7 14Z" fill="#f0a04b"/>
<path d="M14.4 9.6 L15 9 Q15.8 9 16 10.2 L15.6 10.8Z" fill="#f3e6e0"/></svg></div><div class="c i" style="left:97px;width:67px"><svg class="ic" width="16" height="16" viewBox="0 0 16 16" ><rect x="4.3" y="0.6" width="7.6" height="7.8" fill="#d9ab58" stroke="#c09240" stroke-width="0.6"/>
<rect x="0.4" y="8.3" width="7.7" height="7.4" fill="#d9ab58" stroke="#c09240" stroke-width="0.6"/>
<rect x="8.1" y="8.3" width="7.5" height="7.4" fill="#d9ab58" stroke="#c09240" stroke-width="0.6"/>
<rect x="7.6" y="0.6" width="1" height="3" fill="#8a6520"/>
<rect x="3.7" y="8.3" width="1" height="2.8" fill="#8a6520"/>
<rect x="5.4" y="5.6" width="1.6" height="1.6" fill="#b9bcc0"/><rect x="1.4" y="13" width="1.6" height="1.6" fill="#b9bcc0"/><circle cx="12" cy="12" r="3.9" fill="#86b84a"/><path d="M12 9.6V14.4M9.6 12H14.4" stroke="#e9f4dc" stroke-width="1"/></svg></div><div class="c i" style="left:164px;width:52px"><svg class="ic" width="16" height="16" viewBox="0 0 16 16" ><rect x="4.3" y="0.6" width="7.6" height="7.8" fill="#d9ab58" stroke="#c09240" stroke-width="0.6"/>
<rect x="0.4" y="8.3" width="7.7" height="7.4" fill="#d9ab58" stroke="#c09240" stroke-width="0.6"/>
<rect x="8.1" y="8.3" width="7.5" height="7.4" fill="#d9ab58" stroke="#c09240" stroke-width="0.6"/>
<rect x="7.6" y="0.6" width="1" height="3" fill="#8a6520"/>
<rect x="3.7" y="8.3" width="1" height="2.8" fill="#8a6520"/>
<rect x="5.4" y="5.6" width="1.6" height="1.6" fill="#b9bcc0"/><rect x="1.4" y="13" width="1.6" height="1.6" fill="#b9bcc0"/><path d="M9.2 9.4 L15.4 15.4 M15.4 9.4 L9.2 15.4" stroke="#a3170f" stroke-width="2.6"/></svg></div><div class="c i" style="left:216px;width:66px"><svg class="ic" width="16" height="16" viewBox="0 0 16 16" ><circle cx="8" cy="8" r="8" fill="#8dbb3c"/><circle cx="8" cy="8" r="6.6" fill="#86b535"/><path d="M8 3.6V12.4M3.6 8H12.4" stroke="#fff" stroke-width="2.2"/></svg></div><div class="c i" style="left:282px;width:61px"><svg class="ic" width="16" height="16" viewBox="0 0 16 16" ><path d="M3.5 0 L8 4.5 L12.5 0 L16 3.5 L11.5 8 L16 12.5 L12.5 16 L8 11.5 L3.5 16 L0 12.5 L4.5 8 L0 3.5Z" fill="#8f1a10"/><path d="M3.5 0 L8 4.5 L12.5 0 L16 3.5 L15.2 4.3 Q9.5 5 4.9 7.6 L4.5 8 L0 3.5Z" fill="#9c3127"/></svg></div><div class="c i" style="left:343px;width:41px"><svg class="ic" width="16" height="16" viewBox="0 0 16 16" ><circle cx="8" cy="8" r="8" fill="#d9872b"/><circle cx="8" cy="8" r="6.6" fill="#d28026"/><path d="M8 3.6V12.4M3.6 8H12.4" stroke="#fff" stroke-width="2.2"/></svg></div><div class="c t" style="left:384px;width:30px">9</div><div class="c i" style="left:414px;width:54px"><svg class="ic" width="16" height="16" viewBox="0 0 16 16" ><path d="M5.2 0.8 H10.8 V7.6 H15.2 L8 15.4 L0.8 7.6 H5.2Z" fill="#a52a25"/></svg></div><div class="c t" style="left:468px;width:126px">French</div><div class="c t" style="left:594px;width:185px">Subtitling #1 (52)</div><div class="c i" style="left:779px;width:55px"><svg class="ic" width="16" height="16" viewBox="0 0 16 16" ><rect x="0" y="0" width="16" height="16" rx="2.6" fill="#cdeefa"/><path d="M8.8 3.7 Q12.6 3 13.3 6.4" fill="none" stroke="#050505" stroke-width="1.9" stroke-linecap="round"/><path d="M2.7 10 Q3.2 13 7 12.4" fill="none" stroke="#050505" stroke-width="1.9" stroke-linecap="round"/><path d="M4 3.2 L4.4 5.2 Q6 7.4 9.2 7.6 M2.6 6.6 L4.2 5.2" fill="none" stroke="#1c2a30" stroke-width="0.8"/><text x="9.3" y="13" font-size="5.4" font-family="Liberation Sans, sans-serif" fill="#6c8089">IS</text></svg></div><div class="c t" style="left:834px;width:201px">Translation</div><div class="c t" style="left:1035px;width:183px">All pre production tasks ...</div><div class="c i" style="left:1218px;width:47px"><svg class="ic" width="16" height="16" viewBox="0 0 16 16" ><path d="M8 5 L3.4 11 M8 5 L12.6 11" stroke="#8d9099" stroke-width="1.5" fill="none"/><rect x="4.6" y="0.4" width="6.8" height="5" fill="#5ec5f2"/><path d="M4.6 2.9H11.4" stroke="#3f9ccc" stroke-width="0.8"/><circle cx="3.2" cy="12.4" r="3.3" fill="#f7c83a"/><circle cx="12.8" cy="12.4" r="3.3" fill="#f7c83a"/><path d="M2.4 11 V12.2 L4 13.2 M12 11 V12.2 L13.6 13.2" stroke="#7a6420" stroke-width="0.8" fill="none"/></svg></div><div class="c i" style="left:1265px;width:79px"><svg class="ic" width="16" height="16" viewBox="0 0 16 16" ><circle cx="8" cy="8" r="8" fill="#f6d532"/><path d="M5.6 3.8 L12.6 8 L5.6 12.2Z" fill="#5c4d14"/></svg></div><div class="c i" style="left:1344px;width:117px"><svg class="ic" width="16" height="16" viewBox="0 0 16 16" ><circle cx="8" cy="8" r="8" fill="#cbcbcb"/></svg></div><div class="c t res" style="left:1461px;width:248px"></div><div class="c i tk" style="left:1709px;width:75px"><svg class="ic" width="16" height="11" viewBox="0 0 16 11" ><rect x="0" y="0.2" width="5.3" height="5.8" rx="0.6" fill="#c8935a"/><rect x="1.2" y="0.9" width="3.2" height="1.1" fill="#2a1c10"/><rect x="1.4" y="2.6" width="2.8" height="2.4" fill="#d9a469"/><rect x="5.5" y="0.2" width="5.4" height="5.8" rx="0.6" fill="#9dd3ea"/><rect x="6.3" y="3.7" width="2.6" height="1" fill="#1c2a33"/><rect x="6.3" y="1.8" width="1" height="1" fill="#1c2a33"/><rect x="11.1" y="0.2" width="5.3" height="5.8" rx="0.6" fill="#bcd68c"/><path d="M12 4.8 L15.2 1.4" stroke="#141b08" stroke-width="1.5"/><rect x="2.8" y="6.1" width="5.2" height="5" rx="1.8" fill="#a99ad0"/><path d="M4 7.6h2.6M4 9.5h2.6" stroke="#6a5a9a" stroke-width="0.9"/><rect x="8.1" y="6.1" width="5.6" height="5" rx="0.6" fill="#d98683"/><rect x="8.9" y="6.8" width="3.8" height="2.9" rx="0.9" fill="#0c0606"/><circle cx="10.8" cy="7.9" r="0.5" fill="#f4b7b5"/></svg></div><div class="c t" style="left:1784px;width:75px">0</div>
</div>
<div class="row alt" style="top:360px">
<div class="c i first" style="left:0px;width:56px"><svg class="ic" width="16" height="16" viewBox="0 0 16 16" ><rect x="0.4" y="1.4" width="15.2" height="11.2" rx="1" fill="#fff" stroke="#2e2e2e" stroke-width="0.8"/>
<path d="M1.5 2.5 L6 7 Q8 8.2 10 7 L14.5 2.5 M1.5 11.5 L6 7 M14.5 11.5 L10 7" fill="none" stroke="#333" stroke-width="0.9"/>
<ellipse cx="6.4" cy="13.4" rx="2.2" ry="1.85" fill="none" stroke="#e9bd3a" stroke-width="1.5"/>
<ellipse cx="13.1" cy="13.4" rx="2.2" ry="1.85" fill="none" stroke="#4db4e6" stroke-width="1.5"/>
<path d="M6.6 13.4 H12.8" stroke="#8a8f96" stroke-width="1"/></svg></div><div class="c i" style="left:56px;width:41px"><svg class="ic" width="16" height="16" viewBox="0 0 16 16" ><path d="M0.5 15.6 Q1 11.6 5.5 11 L10 11 Q14.5 11.6 15 15.6 Q8 16.6 0.5 15.6Z" fill="#2f86d3"/>
<path d="M5.6 10.2 L6 12 Q7.7 13.6 9.6 12 L9.9 10.2Z" fill="#f4bf78"/>
<ellipse cx="7.7" cy="6.8" rx="4.1" ry="4.5" fill="#f6c47c"/>
<path d="M3.5 6.4 Q3 1.4 7.7 0.6 Q12.4 1.4 11.9 6.4 Q11 3.8 7.7 4 Q4.4 3.8 3.5 6.4Z" fill="#1d1712"/>
<path d="M11 14.6 L11.4 12.8 L14.4 9.6 L15.6 10.8 L12.7 14Z" fill="#f0a04b"/>
<path d="M14.4 9.6 L15 9 Q15.8 9 16 10.2 L15.6 10.8Z" fill="#f3e6e0"/></svg></div><div class="c i" style="left:97px;width:67px"><svg class="ic" width="16" height="16" viewBox="0 0 16 16" ><rect x="4.3" y="0.6" width="7.6" height="7.8" fill="#d9ab58" stroke="#c09240" stroke-width="0.6"/>
<rect x="0.4" y="8.3" width="7.7" height="7.4" fill="#d9ab58" stroke="#c09240" stroke-width="0.6"/>
<rect x="8.1" y="8.3" width="7.5" height="7.4" fill="#d9ab58" stroke="#c09240" stroke-width="0.6"/>
<rect x="7.6" y="0.6" width="1" height="3" fill="#8a6520"/>
<rect x="3.7" y="8.3" width="1" height="2.8" fill="#8a6520"/>
<rect x="5.4" y="5.6" width="1.6" height="1.6" fill="#b9bcc0"/><rect x="1.4" y="13" width="1.6" height="1.6" fill="#b9bcc0"/><circle cx="12" cy="12" r="3.9" fill="#86b84a"/><path d="M12 9.6V14.4M9.6 12H14.4" stroke="#e9f4dc" stroke-width="1"/></svg></div><div class="c i" style="left:164px;width:52px"></div><div class="c i" style="left:216px;width:66px"><svg class="ic" width="16" height="16" viewBox="0 0 16 16" ><circle cx="8" cy="8" r="8" fill="#8dbb3c"/><circle cx="8" cy="8" r="6.6" fill="#86b535"/><path d="M8 3.6V12.4M3.6 8H12.4" stroke="#fff" stroke-width="2.2"/></svg></div><div class="c i" style="left:282px;width:61px"><svg class="ic" width="16" height="16" viewBox="0 0 16 16" ><path d="M3.5 0 L8 4.5 L12.5 0 L16 3.5 L11.5 8 L16 12.5 L12.5 16 L8 11.5 L3.5 16 L0 12.5 L4.5 8 L0 3.5Z" fill="#8f1a10"/><path d="M3.5 0 L8 4.5 L12.5 0 L16 3.5 L15.2 4.3 Q9.5 5 4.9 7.6 L4.5 8 L0 3.5Z" fill="#9c3127"/></svg></div><div class="c i" style="left:343px;width:41px"><svg class="ic" width="16" height="16" viewBox="0 0 16 16" ><circle cx="8" cy="8" r="8" fill="#d9872b"/><circle cx="8" cy="8" r="6.6" fill="#d28026"/><path d="M8 3.6V12.4M3.6 8H12.4" stroke="#fff" stroke-width="2.2"/></svg></div><div class="c t" style="left:384px;width:30px">10</div><div class="c i" style="left:414px;width:54px"><svg class="ic" width="16" height="16" viewBox="0 0 16 16" ><path d="M5.2 15.2 H10.8 V8.4 H15.2 L8 0.6 L0.8 8.4 H5.2Z" fill="#60b05f"/></svg><span class="gap"></span><svg class="ic" width="16" height="16" viewBox="0 0 16 16" ><path d="M5.2 0.8 H10.8 V7.6 H15.2 L8 15.4 L0.8 7.6 H5.2Z" fill="#a52a25"/></svg></div><div class="c t" style="left:468px;width:126px">French</div><div class="c t" style="left:594px;width:185px">Subtitling #1 (52)</div><div class="c i" style="left:779px;width:55px"><svg class="ic" width="16" height="16" viewBox="0 0 16 16" ><g opacity="0.19"><rect x="0" y="0" width="16" height="16" rx="2.6" fill="#ffffff"/><path d="M4.6 2.2 H9.4 Q13 2.8 13 7.2 V12.4 Q13 14 11.4 14 H4.6 Q3 14 3 12.4 V3.8 Q3 2.2 4.6 2.2Z" fill="none" stroke="#000000" stroke-width="1.7"/><path d="M9.7 3.4 V5.5 H11.6" fill="none" stroke="#000000" stroke-width="1.3"/><path d="M5.4 8.6 H11" stroke="#000000" stroke-width="0.9"/><rect x="5.4" y="10.1" width="5.6" height="1.7" fill="#222222"/><path d="M4.6 4.7 H7.8" stroke="#000000" stroke-width="0.7" stroke-opacity="0.55"/></g></svg></div><div class="c t" style="left:834px;width:201px">Timing</div><div class="c t" style="left:1035px;width:183px">Flow</div><div class="c i" style="left:1218px;width:47px"><svg class="ic" width="16" height="16" viewBox="0 0 16 16" ><path d="M8 5 L3.4 11 M8 5 L12.6 11" stroke="#8d9099" stroke-width="1.5" fill="none"/><rect x="4.6" y="0.4" width="6.8" height="5" fill="#5ec5f2"/><path d="M4.6 2.9H11.4" stroke="#3f9ccc" stroke-width="0.8"/><circle cx="3.2" cy="12.4" r="3.3" fill="#f7c83a"/><circle cx="12.8" cy="12.4" r="3.3" fill="#f7c83a"/><path d="M2.4 11 V12.2 L4 13.2 M12 11 V12.2 L13.6 13.2" stroke="#7a6420" stroke-width="0.8" fill="none"/></svg></div><div class="c i" style="left:1265px;width:79px"><svg class="ic" width="16" height="16" viewBox="0 0 16 16" ><circle cx="8" cy="8" r="8" fill="#f6d532"/><path d="M5.6 3.8 L12.6 8 L5.6 12.2Z" fill="#5c4d14"/></svg></div><div class="c i" style="left:1344px;width:117px"><svg class="ic" width="16" height="16" viewBox="0 0 16 16" ><circle cx="8" cy="8" r="8" fill="#cbcbcb"/></svg></div><div class="c t res" style="left:1461px;width:248px"></div><div class="c i tk" style="left:1709px;width:75px"><svg class="ic" width="16" height="11" viewBox="0 0 16 11" ><rect x="0" y="0.2" width="5.3" height="5.8" rx="0.6" fill="#c8935a"/><rect x="1.2" y="0.9" width="3.2" height="1.1" fill="#2a1c10"/><rect x="1.4" y="2.6" width="2.8" height="2.4" fill="#d9a469"/><rect x="5.5" y="0.2" width="5.4" height="5.8" rx="0.6" fill="#9dd3ea"/><rect x="6.3" y="3.7" width="2.6" height="1" fill="#1c2a33"/><rect x="6.3" y="1.8" width="1" height="1" fill="#1c2a33"/><rect x="11.1" y="0.2" width="5.3" height="5.8" rx="0.6" fill="#bcd68c"/><path d="M12 4.8 L15.2 1.4" stroke="#141b08" stroke-width="1.5"/><rect x="2.8" y="6.1" width="5.2" height="5" rx="1.8" fill="#a99ad0"/><path d="M4 7.6h2.6M4 9.5h2.6" stroke="#6a5a9a" stroke-width="0.9"/><rect x="8.1" y="6.1" width="5.6" height="5" rx="0.6" fill="#d98683"/><rect x="8.9" y="6.8" width="3.8" height="2.9" rx="0.9" fill="#0c0606"/><circle cx="10.8" cy="7.9" r="0.5" fill="#f4b7b5"/></svg></div><div class="c t" style="left:1784px;width:75px">0</div>
</div>
<div class="row " style="top:400px">
<div class="c i first" style="left:0px;width:56px"><svg class="ic" width="16" height="16" viewBox="0 0 16 16" ><rect x="0.4" y="1.4" width="15.2" height="11.2" rx="1" fill="#fff" stroke="#2e2e2e" stroke-width="0.8"/>
<path d="M1.5 2.5 L6 7 Q8 8.2 10 7 L14.5 2.5 M1.5 11.5 L6 7 M14.5 11.5 L10 7" fill="none" stroke="#333" stroke-width="0.9"/>
<ellipse cx="6.4" cy="13.4" rx="2.2" ry="1.85" fill="none" stroke="#e9bd3a" stroke-width="1.5"/>
<ellipse cx="13.1" cy="13.4" rx="2.2" ry="1.85" fill="none" stroke="#4db4e6" stroke-width="1.5"/>
<path d="M6.6 13.4 H12.8" stroke="#8a8f96" stroke-width="1"/></svg></div><div class="c i" style="left:56px;width:41px"><svg class="ic" width="16" height="16" viewBox="0 0 16 16" ><path d="M0.5 15.6 Q1 11.6 5.5 11 L10 11 Q14.5 11.6 15 15.6 Q8 16.6 0.5 15.6Z" fill="#2f86d3"/>
<path d="M5.6 10.2 L6 12 Q7.7 13.6 9.6 12 L9.9 10.2Z" fill="#f4bf78"/>
<ellipse cx="7.7" cy="6.8" rx="4.1" ry="4.5" fill="#f6c47c"/>
<path d="M3.5 6.4 Q3 1.4 7.7 0.6 Q12.4 1.4 11.9 6.4 Q11 3.8 7.7 4 Q4.4 3.8 3.5 6.4Z" fill="#1d1712"/>
<path d="M11 14.6 L11.4 12.8 L14.4 9.6 L15.6 10.8 L12.7 14Z" fill="#f0a04b"/>
<path d="M14.4 9.6 L15 9 Q15.8 9 16 10.2 L15.6 10.8Z" fill="#f3e6e0"/></svg></div><div class="c i" style="left:97px;width:67px"><svg class="ic" width="16" height="16" viewBox="0 0 16 16" ><rect x="4.3" y="0.6" width="7.6" height="7.8" fill="#d9ab58" stroke="#c09240" stroke-width="0.6"/>
<rect x="0.4" y="8.3" width="7.7" height="7.4" fill="#d9ab58" stroke="#c09240" stroke-width="0.6"/>
<rect x="8.1" y="8.3" width="7.5" height="7.4" fill="#d9ab58" stroke="#c09240" stroke-width="0.6"/>
<rect x="7.6" y="0.6" width="1" height="3" fill="#8a6520"/>
<rect x="3.7" y="8.3" width="1" height="2.8" fill="#8a6520"/>
<rect x="5.4" y="5.6" width="1.6" height="1.6" fill="#b9bcc0"/><rect x="1.4" y="13" width="1.6" height="1.6" fill="#b9bcc0"/><circle cx="12" cy="12" r="3.9" fill="#86b84a"/><path d="M12 9.6V14.4M9.6 12H14.4" stroke="#e9f4dc" stroke-width="1"/></svg></div><div class="c i" style="left:164px;width:52px"></div><div class="c i" style="left:216px;width:66px"><svg class="ic" width="16" height="16" viewBox="0 0 16 16" ><circle cx="8" cy="8" r="8" fill="#8dbb3c"/><circle cx="8" cy="8" r="6.6" fill="#86b535"/><path d="M8 3.6V12.4M3.6 8H12.4" stroke="#fff" stroke-width="2.2"/></svg></div><div class="c i" style="left:282px;width:61px"><svg class="ic" width="16" height="16" viewBox="0 0 16 16" ><path d="M3.5 0 L8 4.5 L12.5 0 L16 3.5 L11.5 8 L16 12.5 L12.5 16 L8 11.5 L3.5 16 L0 12.5 L4.5 8 L0 3.5Z" fill="#8f1a10"/><path d="M3.5 0 L8 4.5 L12.5 0 L16 3.5 L15.2 4.3 Q9.5 5 4.9 7.6 L4.5 8 L0 3.5Z" fill="#9c3127"/></svg></div><div class="c i" style="left:343px;width:41px"><svg class="ic" width="16" height="16" viewBox="0 0 16 16" ><circle cx="8" cy="8" r="8" fill="#d9872b"/><circle cx="8" cy="8" r="6.6" fill="#d28026"/><path d="M8 3.6V12.4M3.6 8H12.4" stroke="#fff" stroke-width="2.2"/></svg></div><div class="c t" style="left:384px;width:30px">11</div><div class="c i" style="left:414px;width:54px"><svg class="ic" width="16" height="16" viewBox="0 0 16 16" ><path d="M5.2 15.2 H10.8 V8.4 H15.2 L8 0.6 L0.8 8.4 H5.2Z" fill="#60b05f"/></svg></div><div class="c t" style="left:468px;width:126px">French</div><div class="c t" style="left:594px;width:185px">Subtitling #1 (52)</div><div class="c i" style="left:779px;width:55px"><svg class="ic" width="16" height="16" viewBox="0 0 16 16" ><g opacity="0.19"><rect x="0" y="0" width="16" height="16" rx="2.6" fill="#ffffff"/><path d="M4.6 2.2 H9.4 Q13 2.8 13 7.2 V12.4 Q13 14 11.4 14 H4.6 Q3 14 3 12.4 V3.8 Q3 2.2 4.6 2.2Z" fill="none" stroke="#000000" stroke-width="1.7"/><path d="M9.7 3.4 V5.5 H11.6" fill="none" stroke="#000000" stroke-width="1.3"/><path d="M5.4 8.6 H11" stroke="#000000" stroke-width="0.9"/><rect x="5.4" y="10.1" width="5.6" height="1.7" fill="#222222"/><path d="M4.6 4.7 H7.8" stroke="#000000" stroke-width="0.7" stroke-opacity="0.55"/></g></svg></div><div class="c t" style="left:834px;width:201px">QC</div><div class="c t" style="left:1035px;width:183px">Flow</div><div class="c i" style="left:1218px;width:47px"><svg class="ic" width="16" height="16" viewBox="0 0 16 16" ><path d="M8 5 L3.4 11 M8 5 L12.6 11" stroke="#8d9099" stroke-width="1.5" fill="none"/><rect x="4.6" y="0.4" width="6.8" height="5" fill="#a9a9a9"/><path d="M4.6 2.9H11.4" stroke="#8a8a8a" stroke-width="0.8"/><circle cx="3.2" cy="12.4" r="3.3" fill="#d8d8d8"/><circle cx="12.8" cy="12.4" r="3.3" fill="#d8d8d8"/><path d="M2.4 11 V12.2 L4 13.2 M12 11 V12.2 L13.6 13.2" stroke="#8a8a8a" stroke-width="0.8" fill="none"/></svg></div><div class="c i" style="left:1265px;width:79px"><svg class="ic" width="16" height="16" viewBox="0 0 16 16" ><circle cx="8" cy="8" r="8" fill="#f6d532"/><path d="M5.6 3.8 L12.6 8 L5.6 12.2Z" fill="#5c4d14"/></svg></div><div class="c i" style="left:1344px;width:117px"><svg class="ic" width="16" height="16" viewBox="0 0 16 16" ><circle cx="8" cy="8" r="8" fill="#cbcbcb"/></svg></div><div class="c t res" style="left:1461px;width:248px"></div><div class="c i tk" style="left:1709px;width:75px"><svg class="ic" width="16" height="11" viewBox="0 0 16 11" ><rect x="0" y="0.2" width="5.3" height="5.8" rx="0.6" fill="#c8935a"/><rect x="1.2" y="0.9" width="3.2" height="1.1" fill="#2a1c10"/><rect x="1.4" y="2.6" width="2.8" height="2.4" fill="#d9a469"/><rect x="5.5" y="0.2" width="5.4" height="5.8" rx="0.6" fill="#9dd3ea"/><rect x="6.3" y="3.7" width="2.6" height="1" fill="#1c2a33"/><rect x="6.3" y="1.8" width="1" height="1" fill="#1c2a33"/><rect x="11.1" y="0.2" width="5.3" height="5.8" rx="0.6" fill="#bcd68c"/><path d="M12 4.8 L15.2 1.4" stroke="#141b08" stroke-width="1.5"/><rect x="2.8" y="6.1" width="5.2" height="5" rx="1.8" fill="#a99ad0"/><path d="M4 7.6h2.6M4 9.5h2.6" stroke="#6a5a9a" stroke-width="0.9"/><rect x="8.1" y="6.1" width="5.6" height="5" rx="0.6" fill="#d98683"/><rect x="8.9" y="6.8" width="3.8" height="2.9" rx="0.9" fill="#0c0606"/><circle cx="10.8" cy="7.9" r="0.5" fill="#f4b7b5"/></svg></div><div class="c t" style="left:1784px;width:75px">0</div>
</div>
<div class="row alt" style="top:440px">
<div class="c i first" style="left:0px;width:56px"><svg class="ic" width="16" height="16" viewBox="0 0 16 16" ><rect x="0.4" y="1.4" width="15.2" height="11.2" rx="1" fill="#fff" stroke="#2e2e2e" stroke-width="0.8"/>
<path d="M1.5 2.5 L6 7 Q8 8.2 10 7 L14.5 2.5 M1.5 11.5 L6 7 M14.5 11.5 L10 7" fill="none" stroke="#333" stroke-width="0.9"/>
<ellipse cx="6.4" cy="13.4" rx="2.2" ry="1.85" fill="none" stroke="#e9bd3a" stroke-width="1.5"/>
<ellipse cx="13.1" cy="13.4" rx="2.2" ry="1.85" fill="none" stroke="#4db4e6" stroke-width="1.5"/>
<path d="M6.6 13.4 H12.8" stroke="#8a8f96" stroke-width="1"/></svg></div><div class="c i" style="left:56px;width:41px"><svg class="ic" width="16" height="16" viewBox="0 0 16 16" ><path d="M0.5 15.6 Q1 11.6 5.5 11 L10 11 Q14.5 11.6 15 15.6 Q8 16.6 0.5 15.6Z" fill="#2f86d3"/>
<path d="M5.6 10.2 L6 12 Q7.7 13.6 9.6 12 L9.9 10.2Z" fill="#f4bf78"/>
<ellipse cx="7.7" cy="6.8" rx="4.1" ry="4.5" fill="#f6c47c"/>
<path d="M3.5 6.4 Q3 1.4 7.7 0.6 Q12.4 1.4 11.9 6.4 Q11 3.8 7.7 4 Q4.4 3.8 3.5 6.4Z" fill="#1d1712"/>
<path d="M11 14.6 L11.4 12.8 L14.4 9.6 L15.6 10.8 L12.7 14Z" fill="#f0a04b"/>
<path d="M14.4 9.6 L15 9 Q15.8 9 16 10.2 L15.6 10.8Z" fill="#f3e6e0"/></svg></div><div class="c i" style="left:97px;width:67px"><svg class="ic" width="16" height="16" viewBox="0 0 16 16" ><rect x="4.3" y="0.6" width="7.6" height="7.8" fill="#d9ab58" stroke="#c09240" stroke-width="0.6"/>
<rect x="0.4" y="8.3" width="7.7" height="7.4" fill="#d9ab58" stroke="#c09240" stroke-width="0.6"/>
<rect x="8.1" y="8.3" width="7.5" height="7.4" fill="#d9ab58" stroke="#c09240" stroke-width="0.6"/>
<rect x="7.6" y="0.6" width="1" height="3" fill="#8a6520"/>
<rect x="3.7" y="8.3" width="1" height="2.8" fill="#8a6520"/>
<rect x="5.4" y="5.6" width="1.6" height="1.6" fill="#b9bcc0"/><rect x="1.4" y="13" width="1.6" height="1.6" fill="#b9bcc0"/><circle cx="12" cy="12" r="3.9" fill="#86b84a"/><path d="M12 9.6V14.4M9.6 12H14.4" stroke="#e9f4dc" stroke-width="1"/></svg></div><div class="c i" style="left:164px;width:52px"></div><div class="c i" style="left:216px;width:66px"><svg class="ic" width="16" height="16" viewBox="0 0 16 16" ><circle cx="8" cy="8" r="8" fill="#8dbb3c"/><circle cx="8" cy="8" r="6.6" fill="#86b535"/><path d="M8 3.6V12.4M3.6 8H12.4" stroke="#fff" stroke-width="2.2"/></svg></div><div class="c i" style="left:282px;width:61px"><svg class="ic" width="16" height="16" viewBox="0 0 16 16" ><path d="M3.5 0 L8 4.5 L12.5 0 L16 3.5 L11.5 8 L16 12.5 L12.5 16 L8 11.5 L3.5 16 L0 12.5 L4.5 8 L0 3.5Z" fill="#8f1a10"/><path d="M3.5 0 L8 4.5 L12.5 0 L16 3.5 L15.2 4.3 Q9.5 5 4.9 7.6 L4.5 8 L0 3.5Z" fill="#9c3127"/></svg></div><div class="c i" style="left:343px;width:41px"><svg class="ic" width="16" height="16" viewBox="0 0 16 16" ><circle cx="8" cy="8" r="8" fill="#d9872b"/><circle cx="8" cy="8" r="6.6" fill="#d28026"/><path d="M8 3.6V12.4M3.6 8H12.4" stroke="#fff" stroke-width="2.2"/></svg></div><div class="c t" style="left:384px;width:30px">12</div><div class="c i" style="left:414px;width:54px"><svg class="ic" width="16" height="16" viewBox="0 0 16 16" ><path d="M5.2 0.8 H10.8 V7.6 H15.2 L8 15.4 L0.8 7.6 H5.2Z" fill="#a52a25"/></svg></div><div class="c t" style="left:468px;width:126px">Post production</div><div class="c t" style="left:594px;width:185px"></div><div class="c i" style="left:779px;width:55px"><svg class="ic" width="16" height="16" viewBox="0 0 16 16" ><rect x="0.5" y="0.5" width="15" height="15" rx="1.5" fill="none" stroke="#262626" stroke-width="1" stroke-dasharray="2 1.4"/></svg></div><div class="c t" style="left:834px;width:201px">Delivery to client</div><div class="c t" style="left:1035px;width:183px">Flow</div><div class="c i" style="left:1218px;width:47px"><svg class="ic" width="16" height="16" viewBox="0 0 16 16" ><path d="M8 5 L3.4 11 M8 5 L12.6 11" stroke="#8d9099" stroke-width="1.5" fill="none"/><rect x="4.6" y="0.4" width="6.8" height="5" fill="#a9a9a9"/><path d="M4.6 2.9H11.4" stroke="#8a8a8a" stroke-width="0.8"/><circle cx="3.2" cy="12.4" r="3.3" fill="#d8d8d8"/><circle cx="12.8" cy="12.4" r="3.3" fill="#d8d8d8"/><path d="M2.4 11 V12.2 L4 13.2 M12 11 V12.2 L13.6 13.2" stroke="#8a8a8a" stroke-width="0.8" fill="none"/></svg></div><div class="c i" style="left:1265px;width:79px"><svg class="ic" width="16" height="16" viewBox="0 0 16 16" ><circle cx="8" cy="8" r="8" fill="#4f86dd"/><path d="M5.6 3.8 L12.6 8 L5.6 12.2Z" fill="#fff"/></svg></div><div class="c i" style="left:1344px;width:117px"><svg class="ic" width="16" height="16" viewBox="0 0 16 16" ><circle cx="8" cy="8" r="8" fill="#cbcbcb"/></svg></div><div class="c t res" style="left:1461px;width:248px"></div><div class="c i tk" style="left:1709px;width:75px"></div><div class="c t" style="left:1784px;width:75px">0</div>
</div>
</div>
<div id="hsb"><svg class="abs" style="left:6px;top:5px" width="5" height="8" viewBox="0 0 5 8"><path d="M5 0V8L0 4Z" fill="#a3a3a3"/></svg><div class="abs" style="left:18px;top:2px;width:320px;height:13px;background:#c1c1c1"></div><svg class="abs" style="left:1815.5px;top:4.5px" width="5" height="8" viewBox="0 0 5 8"><path d="M0 0V8L5 4Z" fill="#505050"/></svg><div class="abs" style="left:1826px;top:0;width:17px;height:17px;background:#dcdcdc"></div></div>
<div id="vsb"><svg class="abs" style="left:5px;top:7px" width="7" height="4.2" viewBox="0 0 8 5"><path d="M0 5H8L4 0Z" fill="#a3a3a3"/></svg><div class="abs" style="left:2px;top:18px;width:13px;height:391px;background:#c1c1c1"></div><svg class="abs" style="left:5px;top:458px" width="7" height="4.2" viewBox="0 0 8 5"><path d="M0 0H8L4 5Z" fill="#505050"/></svg></div>
<div id="gfoot">
<div style="left:56px;width:1px"></div>
<div style="left:97px;width:1px"></div>
<div style="left:164px;width:1px"></div>
<div style="left:216px;width:1px"></div>
<div style="left:282px;width:1px"></div>
<div style="left:343px;width:1px"></div>
<div style="left:384px;width:1px"></div>
<div style="left:414px;width:1px"></div>
<div style="left:468px;width:1px"></div>
<div style="left:594px;width:1px"></div>
<div style="left:779px;width:1px"></div>
<div style="left:834px;width:1px"></div>
<div style="left:1035px;width:1px"></div>
<div style="left:1218px;width:1px"></div>
<div style="left:1265px;width:1px"></div>
<div style="left:1344px;width:1px"></div>
<div style="left:1461px;width:1px"></div>
<div style="left:1709px;width:1px"></div>
<div style="left:1784px;width:1px"></div>
</div>
<div id="gleft"></div>
<div id="gright"></div>
</div>
<div id="tool"><svg class="ic" style="position:absolute;left:8px;top:9px" width="16" height="16" viewBox="0 0 16 16" ><circle cx="8" cy="8" r="8" fill="#8dbb3c"/><circle cx="8" cy="8" r="6.6" fill="#86b535"/><path d="M8 3.6V12.4M3.6 8H12.4" stroke="#fff" stroke-width="2.2"/></svg>
<span style="left:30px;">Add new task</span>
<svg class="ic" style="position:absolute;left:112px;top:9px" width="16" height="16" viewBox="0 0 16 16" ><circle cx="8" cy="8" r="8" fill="#8dbb3c"/><circle cx="8" cy="8" r="6.6" fill="#86b535"/><path d="M8 3.6V12.4M3.6 8H12.4" stroke="#fff" stroke-width="2.2"/></svg>
<span style="left:134px;">Add new step</span>
<svg class="ic" style="position:absolute;left:218px;top:8px" width="16" height="16" viewBox="0 0 16 16" ><rect x="4.3" y="0.6" width="7.6" height="7.8" fill="#d9ab58" stroke="#c09240" stroke-width="0.6"/>
<rect x="0.4" y="8.3" width="7.7" height="7.4" fill="#d9ab58" stroke="#c09240" stroke-width="0.6"/>
<rect x="8.1" y="8.3" width="7.5" height="7.4" fill="#d9ab58" stroke="#c09240" stroke-width="0.6"/>
<rect x="7.6" y="0.6" width="1" height="3" fill="#8a6520"/>
<rect x="3.7" y="8.3" width="1" height="2.8" fill="#8a6520"/>
<rect x="5.4" y="5.6" width="1.6" height="1.6" fill="#b9bcc0"/><rect x="1.4" y="13" width="1.6" height="1.6" fill="#b9bcc0"/><circle cx="12" cy="12" r="3.9" fill="#86b84a"/><path d="M12 9.6V14.4M9.6 12H14.4" stroke="#e9f4dc" stroke-width="1"/></svg>
<span style="left:240px;letter-spacing:0.1px">Add new product</span>
<span style="left:349px;">|</span>
<svg class="ic" style="position:absolute;left:380px;top:9px" width="16" height="16" viewBox="0 0 16 16" ><path d="M0.8 15.4 L4 12.2 M12 4 L15.6 0.4" stroke="#8fc04a" stroke-width="1.5"/><path d="M5.2 10.8 L10.8 5.2" stroke="#8fc04a" stroke-width="6.2" stroke-linecap="round"/><path d="M5.8 6 L10 10.2" stroke="#79a93a" stroke-width="0.8"/></svg>
<span style="left:402px;">Connect all</span>
<svg class="ic" style="position:absolute;left:487px;top:8px" width="16" height="16" viewBox="0 0 16 16" ><path d="M3.4 1.6 H10.6 L14.6 5.6 V15.6 H3.4Z" fill="#fff"/><path d="M10.6 1.6 V5.6 H14.6Z" fill="#cfd4d0"/><circle cx="4" cy="4" r="4" fill="#1f8a45"/><path d="M4 1.6V5.4M2.2 4L4 6L5.8 4" fill="none" stroke="#fff" stroke-width="1.2"/><rect x="8.4" y="8.4" width="7.4" height="7.2" fill="#1f8a45"/><path d="M10.4 10.2 L13.8 13.8 M13.8 10.2 L10.4 13.8" stroke="#fff" stroke-width="1.1"/></svg>
<span style="left:510px;letter-spacing:-0.12px">Export to excel</span>
<svg class="ic" style="position:absolute;left:621px;top:8px" width="16" height="16" viewBox="0 0 16 16" ><rect x="0.4" y="0.4" width="4.6" height="4.6" rx="1" fill="#8dc63f"/><path d="M1.4 2.6 L2.4 3.6 L4 1.6" fill="none" stroke="#fff" stroke-width="0.8"/><circle cx="2.7" cy="8" r="2.4" fill="#2f62c9"/><circle cx="2.7" cy="13.4" r="2.4" fill="#e0622c"/><rect x="1.4" y="13" width="2.6" height="0.9" fill="#fff"/><path d="M6 2.7H11M6 8H11M6 13.4H16" stroke="#e8e8e8" stroke-width="1.2"/><rect x="11" y="1" width="5" height="3.4" rx="0.6" fill="#e8e8e8"/><rect x="11" y="6.3" width="5" height="3.4" rx="1.6" fill="#e8e8e8"/></svg>
<span style="left:644.5px;">Apply automatic assignment</span>
<span style="left:812px;">|</span>
<svg class="ic" style="position:absolute;left:843px;top:8px" width="16" height="16" viewBox="0 0 16 16" ><path d="M3 4 H8 L9.4 5.6 H15.8 V15 H3Z" fill="#d9b64f"/><path d="M0.2 1.4 Q0.2 0.4 1.2 0.4 H5.4 L7 2.4 H12.4 Q13.4 2.4 13.4 3.4 V11.4 Q13.4 12.4 12.4 12.4 H1.2 Q0.2 12.4 0.2 11.4Z" fill="#f7d774"/></svg>
<span style="left:866px;">Order files</span>
<svg class="ic" style="position:absolute;left:932px;top:7px" width="16" height="16" viewBox="0 0 16 16" ><rect x="0.4" y="0.2" width="15.2" height="15.2" rx="2.4" fill="#3a3424"/><rect x="1.2" y="1.6" width="14" height="13" rx="1.6" fill="#f3d476"/><rect x="1.2" y="1.6" width="14" height="3" rx="1.4" fill="#f9e08c"/><path d="M4 1.6 V14.6" stroke="#d4472e" stroke-width="0.8"/><path d="M1.2 13.4 H15.2" stroke="#c9a844" stroke-width="1"/></svg>
<span style="left:954px;letter-spacing:-0.24px">Order messages</span>
<span style="left:1057px;">|</span>
<svg class="ic" style="position:absolute;left:1088px;top:8px" width="16" height="16" viewBox="0 0 16 16" ><rect x="0.4" y="0.2" width="15.2" height="1.6" fill="#4fb5e6"/><path d="M0.6 2.2 H15.4 L9.6 8.6 V13.6 L6.4 12.6 V8.6Z" fill="#8f8f8f"/><rect x="6.4" y="12" width="2.4" height="2.6" fill="#e8b53c"/><circle cx="12.4" cy="12.6" r="3.4" fill="#86b84a"/><path d="M12.4 10.6V14.6M10.4 12.6H14.4" stroke="#fff" stroke-width="1.1"/></svg>
<span style="left:1113px;">Range options</span>
<div class="abs" style="left:1198px;top:7px;width:100px;height:27px;background:#f2a93b;border:1px solid #b8432c;border-radius:4px"></div>
<svg class="ic" style="position:absolute;left:1207px;top:10px" width="16" height="16" viewBox="0 0 16 16" ><g fill="none" stroke="#9c9a94" stroke-width="1.5"><circle cx="8" cy="8" r="5.2" stroke-width="2.6" stroke-dasharray="1.9 1.37"/><circle cx="8" cy="8" r="5.4"/><circle cx="8" cy="8" r="1.6"/><path d="M8 3.4V6.4M8 9.6V12.6M3.4 8H6.4M9.6 8H12.6"/></g></svg>
<span style="left:1229px;color:#111;top:13px;font-size:13px;text-shadow:0 0 0.4px #111">Grid layout</span></div>
<div id="pager"><svg class="abs" style="left:14px;top:14.5px" width="7.5" height="8" viewBox="0 0 9 9"><rect x="0" y="0" width="1.8" height="9" fill="#b8b8b8"/><path d="M9 0V9L2.6 4.5Z" fill="#b8b8b8"/></svg>
<svg class="abs" style="left:45.5px;top:14.5px" width="6" height="8" viewBox="0 0 7 9"><path d="M7 0V9L0 4.5Z" fill="#b8b8b8"/></svg>
<div class="abs" style="left:63px;top:3px;width:30px;height:30px;background:#565656;text-align:center;line-height:30px;font-size:14px">1</div>
<svg class="abs" style="left:104.5px;top:14.5px" width="6" height="8" viewBox="0 0 7 9"><path d="M0 0V9L7 4.5Z" fill="#b8b8b8"/></svg>
<svg class="abs" style="left:133.5px;top:14.5px" width="7.5" height="8" viewBox="0 0 9 9"><rect x="7.2" y="0" width="1.8" height="9" fill="#b8b8b8"/><path d="M0 0V9L6.4 4.5Z" fill="#b8b8b8"/></svg>
<span style="left:167.3px;letter-spacing:-0.6px">Page</span>
<div class="abs" style="left:201px;top:4px;width:68px;height:28px;background:#fff;border-radius:3px;color:#222;line-height:28px;padding-left:8px;font-size:14px">1</div>
<span style="left:276.7px;">of 1</span>
<div class="abs" style="left:312px;top:4px;width:69px;height:28px;background:#2a2a2a;border-radius:3px"></div>
<div class="abs" style="left:312px;top:4px;width:43px;height:28px;background:#fff;border-radius:3px 0 0 3px;color:#222;line-height:28px;padding-left:8px;font-size:14px">20</div>
<svg class="abs" style="left:363px;top:15px" width="9" height="6" viewBox="0 0 9 6"><path d="M0 0H9L4.5 6Z" fill="#fff"/></svg>
<span style="left:388.7px;letter-spacing:-0.06px">items per page</span>
<span style="left:1628.7px;">1 - 13 of 13 items</span>
<div class="abs" style="left:1735px;top:5px;width:26px;height:26px;border-radius:9.5px;background:#252423"></div>
<svg class="abs" style="left:1739px;top:8px" width="18" height="18" viewBox="0 0 18 18"><path d="M9.1 2.6V17" stroke="#fff" stroke-width="2.4"/><path d="M2.6 10.4H6.6M11.6 10.4H15.6" stroke="#fff" stroke-width="1.5"/><path d="M0.5 10.4L4.4 7.6V13.2Z M17.6 10.4L13.7 7.6V13.2Z" fill="#fff"/></svg>
<div class="abs" style="left:1775px;top:5px;width:26px;height:26px;border-radius:9.5px;background:#252423"></div>
<svg class="abs" style="left:1779px;top:8px" width="18" height="18" viewBox="0 0 18 18"><path d="M2.2 4.2 H15.8 L10.7 10.6 V17.2 L7.3 16 V10.6Z" fill="#fff"/><path d="M6.4 1.6 L17.4 11.6" stroke="#252423" stroke-width="3.2"/><path d="M7 2.2 L17.6 11.4" stroke="#fff" stroke-width="1.5"/></svg>
<div class="abs" style="left:1815px;top:5px;width:26px;height:26px;border-radius:9.5px;background:#252423"></div>
<svg class="abs" style="left:1819px;top:8px" width="18" height="18" viewBox="0 0 18 18"><path d="M9.4 5 A6 6 0 1 0 14.6 8.2" fill="none" stroke="#fff" stroke-width="2"/><path d="M9 1.6 L13.8 4.8 L9 8.2Z" fill="#fff"/></svg></div>
<div id="panel"><div class="abs" style="left:0;top:1px;width:0;height:0"><span style="left:14px;top:30px;letter-spacing:-0.14px">Enable task reorder</span>
<svg class="abs" style="left:120px;top:24px" width="24" height="24" viewBox="0 0 24 24"><rect x="0.4" y="0" width="23.2" height="2.4" rx="1" fill="#9a9a9a"/><path d="M0.6 2.8 H23.4 L14.2 13 V23.6 L9.8 22 V13Z" fill="#8c8c8c"/><rect x="9.8" y="19.6" width="4.4" height="2.6" fill="#c9c9c9"/></svg>
<span style="left:161px;top:30px;letter-spacing:0.06px">Update date</span>
<div class="abs" style="left:257px;top:23px;width:229px;height:31px;border:1px solid #3a3a3a;border-radius:3px"></div>
<div class="abs" style="left:258px;top:24px;width:178px;height:28px;background:#fff;border-radius:3px 0 0 3px"></div>
<div class="abs" style="left:461px;top:25px;width:1px;height:27px;background:#3a3a3a"></div>
<svg class="abs" style="left:441.5px;top:29.5px" width="15" height="16" viewBox="0 0 16 17"><rect x="1" y="2.6" width="14" height="13.4" rx="1.4" fill="none" stroke="#e8e8e8" stroke-width="1.3"/><path d="M1 6.4H15" stroke="#e8e8e8" stroke-width="1.3"/><path d="M4.4 0.6V4M11.6 0.6V4" stroke="#e8e8e8" stroke-width="1.5"/><rect x="8.6" y="9.6" width="4" height="4" fill="#e8e8e8"/></svg>
<svg class="abs" style="left:467px;top:31px" width="15" height="15" viewBox="0 0 15 15"><circle cx="7.5" cy="7.5" r="6.4" fill="none" stroke="#e8e8e8" stroke-width="1.3"/><path d="M7.5 3.6V7.8H11" fill="none" stroke="#e8e8e8" stroke-width="1.3"/></svg>
<div class="abs" style="left:488px;top:21px;width:30px;height:35px;background:#2e2d2c;border-radius:6px"></div>
<svg class="abs" style="left:494px;top:29.5px" width="18" height="18" viewBox="0 0 16 16"><g fill="none" stroke="#4e4e4e" stroke-width="1.3"><circle cx="8" cy="8" r="5.4" stroke-width="2.6" stroke-dasharray="2 1.4"/><circle cx="8" cy="8" r="5"/><circle cx="8" cy="8" r="1.8"/></g></svg>
<span style="left:537.7px;top:33px;letter-spacing:-0.1px">Edit mode: <b style="letter-spacing:-0.3px">click cell</b></span>
<div class="abs" style="left:650px;top:23px;width:36px;height:30px;background:linear-gradient(#2f2e2d,#2a2928);border:1px solid #2d2c2b;border-radius:4px"></div>
<svg class="abs" style="left:660px;top:30px" width="16" height="16" viewBox="0 0 16 16"><rect x="0" y="0" width="15.4" height="15.4" fill="#b8b8b8"/><rect x="0.0" y="0.0" width="4.6" height="4.6" fill="#fff"/><rect x="5.4" y="0.0" width="4.6" height="4.6" fill="#fff"/><rect x="10.8" y="0.0" width="4.6" height="4.6" fill="#fff"/><rect x="0.0" y="5.4" width="4.6" height="4.6" fill="#fff"/><rect x="5.4" y="5.4" width="4.6" height="4.6" fill="#fff"/><rect x="10.8" y="5.4" width="4.6" height="4.6" fill="#fff"/><rect x="0.0" y="10.8" width="4.6" height="4.6" fill="#fff"/><rect x="5.4" y="10.8" width="4.6" height="4.6" fill="#fff"/><rect x="10.8" y="10.8" width="4.6" height="4.6" fill="#fff"/></svg>
<div class="abs" style="left:692px;top:23px;width:36px;height:30px;background:linear-gradient(#2f2e2d,#2a2928);border:1px solid #2d2c2b;border-radius:4px"></div>
<svg class="abs" style="left:702px;top:30px" width="16" height="16" viewBox="0 0 16 16"><rect x="0" y="0" width="15.4" height="15.4" fill="#b8b8b8"/><rect x="0.0" y="0.0" width="4.6" height="4.6" fill="#fff"/><rect x="5.4" y="0.0" width="4.6" height="4.6" fill="#fff"/><rect x="10.8" y="0.0" width="4.6" height="4.6" fill="#fff"/><rect x="0.0" y="5.4" width="4.6" height="4.6" fill="#fff"/><rect x="5.4" y="5.4" width="4.6" height="4.6" fill="#5aa5ee"/><rect x="10.8" y="5.4" width="4.6" height="4.6" fill="#fff"/><rect x="0.0" y="10.8" width="4.6" height="4.6" fill="#fff"/><rect x="5.4" y="10.8" width="4.6" height="4.6" fill="#fff"/><rect x="10.8" y="10.8" width="4.6" height="4.6" fill="#fff"/><path d="M8.2 7.6 L8.2 14.4 L10 12.8 L11.4 15.6 L12.6 15 L11.2 12.4 L13.6 12.2Z" fill="#fff" stroke="#333" stroke-width="0.8"/></svg>
<div class="abs" style="left:733px;top:23px;width:38px;height:30px;background:linear-gradient(#3a78de,#2a66cf);border:1px solid #5b94ea;border-radius:4px"></div>
<svg class="abs" style="left:744px;top:30px" width="16" height="16" viewBox="0 0 16 16"><rect x="0" y="0" width="15.4" height="15.4" fill="#b4c6e8"/><rect x="0.0" y="0.0" width="4.6" height="4.6" fill="#fff"/><rect x="5.4" y="0.0" width="4.6" height="4.6" fill="#fff"/><rect x="10.8" y="0.0" width="4.6" height="4.6" fill="#fff"/><rect x="0.0" y="5.4" width="4.6" height="4.6" fill="#fff"/><rect x="5.4" y="5.4" width="4.6" height="4.6" fill="#6fb6ff"/><rect x="10.8" y="5.4" width="4.6" height="4.6" fill="#fff"/><rect x="0.0" y="10.8" width="4.6" height="4.6" fill="#fff"/><rect x="5.4" y="10.8" width="4.6" height="4.6" fill="#fff"/><rect x="10.8" y="10.8" width="4.6" height="4.6" fill="#fff"/></svg></div></div>
<div id="closeb"><svg class="abs" style="left:8px;top:4px" width="24" height="24" viewBox="0 0 24 24"><circle cx="12" cy="12" r="9.8" fill="none" stroke="#d9483f" stroke-width="3.1"/><path d="M5 5 L19 19" stroke="#d9483f" stroke-width="3"/></svg><span class="abs" style="left:38px;top:7px;line-height:18px;font-size:12.5px;letter-spacing:-0.6px">Close</span></div>
<div id="info"><span style="left:409px;letter-spacing:-0.25px">Customer: <b>Barcelos Broductions</b></span>
<span style="left:598px;letter-spacing:-0.17px">Title: <b>A Task Split is a Task Halved</b></span>
<span style="left:797px;letter-spacing:-0.03px">Script: <b>Without script</b></span>
<span style="left:927px;letter-spacing:-0.24px">Source language: <b>English</b></span>
<span style="left:1075px;letter-spacing:-0.21px">Target languages: <b>Spanish,French,Portuguese</b></span></div>
<div class="copy" style="top:920px;text-shadow:0 0 0.5px #fff">Copyright © 2012 <span style="color:#8a8a8a"><i style="color:#9a9a9a">O</i><i style="color:#e8b32e">O</i><i style="color:#39a7dc">O</i>NA.NET</span> ltd. All rights reserved.</div>
<div class="copy" style="top:933px;color:#9a9a9a">Copyright © 2012 <span style="color:#555"><i style="color:#9a9a9a">O</i><i style="color:#7a6220">O</i><i style="color:#2a5a75">O</i>NA.NET</span> ltd. All rights reserved.</div>
</div>
<div class="abs" style="left:1253px;top:270px;width:50px;height:42px;border:5px solid #1b9e2e;box-shadow:1px 3px 6px rgba(0,0,0,.55), inset 1px 2px 6px rgba(0,0,0,.45)"></div>
<div class="abs" style="left:1300px;top:270px;width:40px;height:40px;border-radius:20px;background:#1b9e2e;text-align:center;line-height:43px;padding-left:2px;font-size:31.5px;color:#fff;-webkit-text-stroke:0.7px #fff">1</div>
<div class="abs" style="left:1311px;top:298.3px;width:8.5px;height:5px;background:#1b9e2e"></div>
<div class="abs" style="left:1323.1px;top:298.3px;width:8.4px;height:5px;background:#1b9e2e"></div>
</body></html>
